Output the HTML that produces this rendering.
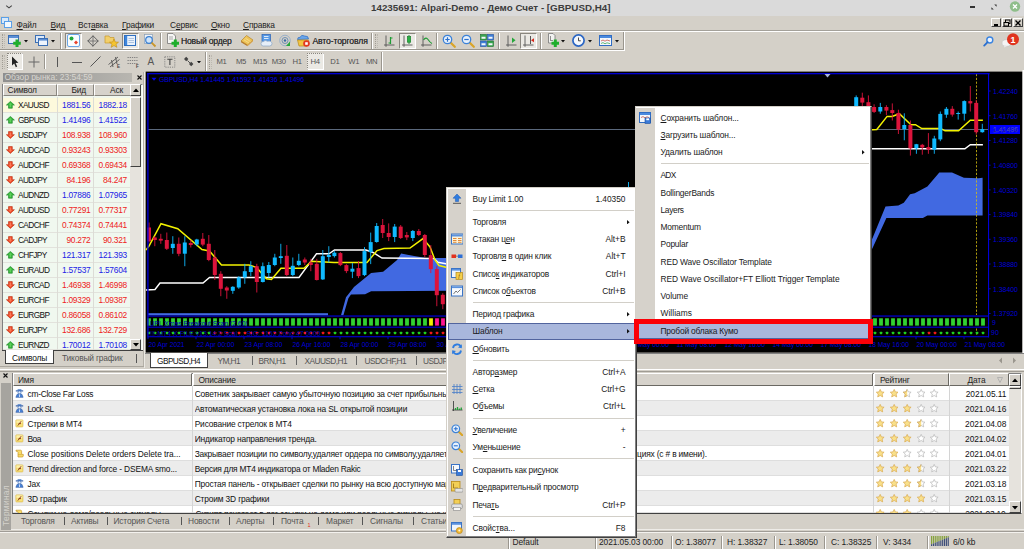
<!DOCTYPE html>
<html lang="ru"><head><meta charset="utf-8"><title>MetaTrader 4</title>
<style>
*{box-sizing:border-box}
html,body{margin:0;padding:0}
body{width:1024px;height:549px;overflow:hidden;position:relative;background:#d4d0c8;
 font-family:"Liberation Sans",sans-serif;font-size:8.4px;color:#111;line-height:1;letter-spacing:-0.17px}
.a{position:absolute;white-space:nowrap}
.t{position:absolute;white-space:nowrap;line-height:10px;height:10px}
u{text-decoration:underline;text-underline-offset:1px;text-decoration-thickness:0.7px}
.btn{position:absolute;background:#e9e7e2;border:1px solid;border-color:#fff #8a8780 #8a8780 #fff}
.pressed{position:absolute;background:#ebe9e4;border:1px solid;border-color:#8a8780 #fff #fff #8a8780}
.vsep{position:absolute;width:2px;border-left:1px solid #9a968e;border-right:1px solid #fff}
.grip{position:absolute;width:3px;border-left:1px dotted #a09c94;border-right:1px dotted #bcb8b0}
svg text{letter-spacing:0}
.tf{position:absolute;font-size:7.7px;letter-spacing:-0.35px;color:#555;line-height:10px;white-space:nowrap}
</style></head>
<body>
<div class="a" style="left:0;top:0;width:1024px;height:16px;background:#dadada"></div>
<div class="a" id="title" style="left:371px;top:1px;height:14px;line-height:14px;font-weight:bold;font-size:9.8px;color:#3c3c3c;letter-spacing:0px">14235691: Alpari-Demo - Демо Счет - [GBPUSD,H4]</div>
<svg class="a" style="left:5px;top:4px" width="8" height="6"><path d="M1.2 1.6 L4 3.9 L6.8 1.6" stroke="#444" stroke-width="1.1" fill="none"/></svg>
<div class="a" style="left:970px;top:6px;width:5px;height:1.5px;background:#333"></div>
<svg class="a" style="left:991px;top:3.5px" width="6" height="6"><path d="M3.2 0.4 L5.6 0.4 L5.6 2.8 Z M0.4 3.2 L0.4 5.6 L2.8 5.6 Z" fill="#333"/></svg>
<svg class="a" style="left:1009px;top:1px" width="12" height="12"><circle cx="6" cy="5.5" r="5.2" fill="#8fbe8a"/><path d="M4 3.5 L8 7.5 M8 3.5 L4 7.5" stroke="#fff" stroke-width="1.4"/></svg>
<div class="a" style="left:0;top:16px;width:1024px;height:14px;background:#d4d0c8"></div>
<div class="a" style="left:0;top:30px;width:1024px;height:1px;background:#a4a19a"></div><div class="a" style="left:0;top:31px;width:1024px;height:1px;background:#fff"></div>
<svg class="a" style="left:1px;top:17px" width="12" height="12"><rect x="0.5" y="0.5" width="7" height="6" fill="#d8e9fa" stroke="#5a9fe8"/><rect x="3.5" y="4.5" width="7" height="6" fill="#f2f8fe" stroke="#5a9fe8"/></svg>
<div class="t mn" id="mn0" style="left:16.5px;top:19.6px;color:#222"><u>Ф</u>айл</div>
<div class="t mn" id="mn1" style="left:50.5px;top:19.6px;color:#222"><u>В</u>ид</div>
<div class="t mn" id="mn2" style="left:78px;top:19.6px;color:#222">Вст<u>а</u>вка</div>
<div class="t mn" id="mn3" style="left:122px;top:19.6px;color:#222"><u>Г</u>рафики</div>
<div class="t mn" id="mn4" style="left:170px;top:19.6px;color:#222">С<u>е</u>рвис</div>
<div class="t mn" id="mn5" style="left:211px;top:19.6px;color:#222"><u>О</u>кно</div>
<div class="t mn" id="mn6" style="left:243px;top:19.6px;color:#222"><u>С</u>правка</div>
<div class="btn" style="left:991px;top:17.5px;width:10px;height:9.5px;background:#d4d0c8;border-color:#fff #404040 #404040 #fff"></div>
<div class="btn" style="left:1002px;top:17.5px;width:10px;height:9.5px;background:#d4d0c8;border-color:#fff #404040 #404040 #fff"></div>
<div class="btn" style="left:1013px;top:17.5px;width:10px;height:9.5px;background:#d4d0c8;border-color:#fff #404040 #404040 #fff"></div>
<div class="a" style="left:993.5px;top:24px;width:4px;height:1.5px;background:#000"></div>
<svg class="a" style="left:1003px;top:18.5px" width="8" height="8"><rect x="2.5" y="1" width="4.5" height="3.5" fill="none" stroke="#000" stroke-width="1"/><rect x="1" y="3.5" width="4.5" height="3.5" fill="#d4d0c8" stroke="#000" stroke-width="1"/></svg>
<svg class="a" style="left:1014px;top:18.5px" width="8" height="8"><path d="M1.5 1.5 L6.5 6.5 M6.5 1.5 L1.5 6.5" stroke="#000" stroke-width="1.3"/></svg>
<div class="a" style="left:0;top:31.5px;width:625px;height:19.5px;border-right:1px solid #fff;border-bottom:1px solid #fff"></div>
<div class="a" style="left:0;top:31.5px;width:624px;height:18.8px;border-right:1px solid #9a968e;border-bottom:1px solid #9a968e"></div>
<div class="grip" style="left:2px;top:34px;height:14px"></div>
<svg class="a" style="left:8px;top:34px" width="14" height="14" viewBox="0 0 14 14" ><rect x="0.5" y="1.5" width="10" height="8" fill="#e6effa" stroke="#3b6fb5"/><rect x="1" y="2" width="9" height="2" fill="#5b8fd6"/><path d="M9 5.5 V13 M5.2 9.2 H12.8" stroke="#1fae2c" stroke-width="3"/></svg>
<svg class="a" style="left:24.0px;top:40px" width="4" height="2.5" viewBox="0 0 4 2.5" ><path d="M0 0 L4 0 L2 2.5 Z" fill="#111"/></svg>
<svg class="a" style="left:35px;top:34px" width="14" height="14" viewBox="0 0 14 14" ><rect x="0.5" y="1.5" width="9" height="7" fill="#dce9f8" stroke="#3b6fb5"/><rect x="3.5" y="4.5" width="9" height="7" fill="#eef4fc" stroke="#3b6fb5"/><rect x="4" y="5" width="8" height="1.6" fill="#5b8fd6"/></svg>
<svg class="a" style="left:51.0px;top:40px" width="4" height="2.5" viewBox="0 0 4 2.5" ><path d="M0 0 L4 0 L2 2.5 Z" fill="#111"/></svg>
<div class="vsep" style="left:60px;top:33px;height:16px"></div>
<div class="pressed" style="left:65px;top:32.5px;width:17px;height:16.5px"></div>
<svg class="a" style="left:67px;top:34px" width="13" height="13" viewBox="0 0 13 13" ><rect x="0.5" y="0.5" width="12" height="12" rx="1.5" fill="#fafdff" stroke="#6aa6e6"/><circle cx="4.5" cy="4.5" r="2" fill="#22a83a"/><path d="M9 6.5 L11 8.5 L9 10.5 L7 8.5 Z" fill="#e8402a"/></svg>
<svg class="a" style="left:86.5px;top:35px" width="12" height="12" viewBox="0 0 12 12" ><path d="M6 0.5 V11.5 M0.5 6 H11.5" stroke="#666" stroke-width="0.8"/><path d="M6 0.8 L11.2 6 L6 11.2 L0.8 6 Z" fill="none" stroke="#555" stroke-width="0.9"/></svg>
<svg class="a" style="left:104px;top:33px" width="15" height="15" viewBox="0 0 15 15" ><path d="M1 3 H5 L6 4.5 H10 V10 H1 Z" fill="#f2cf6a" stroke="#c79a2c" stroke-width="0.7"/><path d="M10 6 L11.3 9 L14.5 9.2 L12 11.2 L12.9 14.3 L10 12.6 L7.1 14.3 L8 11.2 L5.5 9.2 L8.7 9 Z" fill="#f5c530" stroke="#c08a14" stroke-width="0.6"/></svg>
<div class="pressed" style="left:121.5px;top:32.5px;width:17px;height:16.5px"></div>
<svg class="a" style="left:124px;top:35px" width="12" height="11" viewBox="0 0 12 11" ><rect x="0.5" y="0.5" width="11" height="10" fill="#eaf2fc" stroke="#2f6fc0"/><rect x="1" y="1" width="2.2" height="9" fill="#3f86dc"/><path d="M4.5 3.5 H10 M4.5 5.5 H10 M4.5 7.5 H10" stroke="#9db7d8" stroke-width="0.8"/></svg>
<svg class="a" style="left:143px;top:34px" width="14" height="14" viewBox="0 0 14 14" ><rect x="1.5" y="0.5" width="8" height="9" fill="#eef3f8" stroke="#8aa0b8" stroke-width="0.7"/><circle cx="6" cy="6" r="3.3" fill="#cfe4fa" stroke="#3a7fd0" stroke-width="1.2"/><path d="M8.6 8.6 L12.5 12.5" stroke="#c9962a" stroke-width="1.8"/></svg>
<div class="vsep" style="left:159.5px;top:33px;height:16px"></div>
<svg class="a" style="left:166px;top:33px" width="14" height="15" viewBox="0 0 14 15" ><path d="M1.5 0.5 H7 L9.5 3 V10.5 H1.5 Z" fill="#f6f6f4" stroke="#777" stroke-width="0.8"/><path d="M3 4 H7 M3 6 H7" stroke="#888" stroke-width="0.7"/><path d="M9.3 6.5 V14 M5.5 10.3 H13" stroke="#1fae2c" stroke-width="3"/></svg>
<div class="t" id="neword" style="left:181px;top:35.5px;color:#2a2a2a;font-size:8.6px;letter-spacing:-0.2px;text-shadow:0 0 0.2px #555">Новый ордер</div>
<svg class="a" style="left:240px;top:34px" width="14" height="13" viewBox="0 0 14 13" ><path d="M1 7 L6.5 1.5 L13 6 L7.5 11 Z" fill="#eec458" stroke="#b8852a" stroke-width="0.7"/><path d="M1 7 L7.5 11 L7.5 12.3 L1 8.3 Z" fill="#b87a28"/><path d="M7.5 11 L13 6 L13 7.2 L7.5 12.3 Z" fill="#d8a040"/><path d="M4 5.8 L9 9 M5.5 4.3 L10.5 7.5" stroke="#f8e2a0" stroke-width="0.7"/></svg>
<svg class="a" style="left:260px;top:34px" width="13" height="13" viewBox="0 0 13 13" ><rect x="2" y="0.5" width="8.5" height="7" fill="#5a9be6" stroke="#2a62b4" stroke-width="0.7"/><path d="M4 2.5 H8.5 M4 4.5 H8.5" stroke="#fff" stroke-width="0.8"/><path d="M1 9.5 Q1 7.3 3.4 7.6 Q5 5.6 7.5 7.2 Q11.8 6.6 12 9.6 Q12 12 9.5 12 H3.2 Q1 12 1 9.5 Z" fill="#e6eef8" stroke="#8aa6c6" stroke-width="0.7"/></svg>
<svg class="a" style="left:279px;top:34px" width="13" height="13" viewBox="0 0 13 13" ><circle cx="6" cy="6.5" r="5.3" fill="none" stroke="#9ab0c8" stroke-width="1"/><circle cx="6" cy="6.5" r="3" fill="none" stroke="#6d8fb6" stroke-width="1"/><circle cx="6" cy="6.5" r="1.2" fill="#3a6aa6"/><path d="M7 12 L11 7.5 L11 12 Z" fill="#27a838"/></svg>
<svg class="a" style="left:296px;top:33px" width="15" height="15" viewBox="0 0 15 15" ><path d="M1.5 6.5 Q1.5 4 4 4.3 Q5.5 1.2 8.6 3 Q12.5 2.6 12.5 6 Z" fill="#6aa6ea" stroke="#2d6bc0" stroke-width="0.7"/><path d="M1.5 7 H12.5 L11 13 H3 Z" fill="#f2c544" stroke="#b98a18" stroke-width="0.7"/><circle cx="10.5" cy="10.5" r="3.3" fill="#e23a22"/><rect x="9.2" y="9.2" width="2.6" height="2.6" fill="#fff"/></svg>
<div class="t" id="autot" style="left:312.5px;top:35.5px;color:#2a2a2a;font-size:8.6px;letter-spacing:-0.12px;text-shadow:0 0 0.2px #555">Авто-торговля</div>
<div class="vsep" style="left:371px;top:33px;height:16px"></div>
<div class="grip" style="left:375px;top:34px;height:14px"></div>
<svg class="a" style="left:383px;top:34px" width="13" height="14" viewBox="0 0 13 14" ><path d="M3 1.5 V12.8 M1 11 H11.5" stroke="#555" stroke-width="0.9"/><path d="M7.5 3 V10 M7.5 4 H9.5 M5.5 9 H7.5" stroke="#1e9c34" stroke-width="1.2"/></svg>
<div class="pressed" style="left:398.5px;top:32.5px;width:17px;height:16.5px"></div>
<svg class="a" style="left:401px;top:34px" width="13" height="14" viewBox="0 0 13 14" ><path d="M3 1.5 V12.8 M1 11 H11.5" stroke="#555" stroke-width="0.9"/><path d="M8 1 V10" stroke="#157c28" stroke-width="0.9"/><rect x="6.3" y="2.6" width="3.4" height="5.6" fill="#2cb044" stroke="#157c28" stroke-width="0.6"/></svg>
<svg class="a" style="left:420px;top:34px" width="13" height="14" viewBox="0 0 13 14" ><path d="M3 1.5 V12.8 M1 11 H11.5" stroke="#555" stroke-width="0.9"/><path d="M3.5 6 Q6 2.5 8 5.5 T12 9.5" stroke="#1e9c34" stroke-width="1.1" fill="none"/></svg>
<div class="vsep" style="left:435.5px;top:33px;height:16px"></div>
<svg class="a" style="left:442px;top:34px" width="14" height="14" viewBox="0 0 14 14" ><path d="M8.5 8.5 L12.8 12.8" stroke="#d9a428" stroke-width="2.2" stroke-linecap="round"/><circle cx="5.5" cy="5.5" r="4.2" fill="#e6f1fd" stroke="#3c82d8" stroke-width="1.3"/><path d="M3.3 5.5 H7.7 M5.5 3.3 V7.7" stroke="#2a6fcc" stroke-width="1.2"/></svg>
<svg class="a" style="left:461px;top:34px" width="14" height="14" viewBox="0 0 14 14" ><path d="M8.5 8.5 L12.8 12.8" stroke="#d9a428" stroke-width="2.2" stroke-linecap="round"/><circle cx="5.5" cy="5.5" r="4.2" fill="#e6f1fd" stroke="#3c82d8" stroke-width="1.3"/><path d="M3.3 5.5 H7.7" stroke="#2a6fcc" stroke-width="1.2"/></svg>
<svg class="a" style="left:480px;top:34px" width="14" height="13" viewBox="0 0 14 13" ><rect x="0.5" y="0.5" width="6" height="5.5" fill="#3aa650" stroke="#1c6e2c" stroke-width="0.6"/><rect x="7.5" y="0.5" width="6" height="5.5" fill="#3f7fd8" stroke="#1f4f9c" stroke-width="0.6"/><rect x="0.5" y="7" width="6" height="5.5" fill="#3f7fd8" stroke="#1f4f9c" stroke-width="0.6"/><rect x="7.5" y="7" width="6" height="5.5" fill="#3aa650" stroke="#1c6e2c" stroke-width="0.6"/><path d="M1.5 3.8 H5.5 M8.5 3.8 H12.5 M1.5 10.3 H5.5 M8.5 10.3 H12.5" stroke="#f2f6fa" stroke-width="2"/></svg>
<div class="vsep" style="left:497.5px;top:33px;height:16px"></div>
<svg class="a" style="left:504.5px;top:34px" width="13" height="14" viewBox="0 0 13 14" ><path d="M3 1.5 V12.8 M1 11 H11.5" stroke="#555" stroke-width="0.9"/><path d="M7 3.5 L10.5 6.2 L7 9 Z" fill="#25a63a"/></svg>
<div class="pressed" style="left:519.5px;top:32.5px;width:17px;height:16.5px"></div>
<svg class="a" style="left:522px;top:34px" width="13" height="14" viewBox="0 0 13 14" ><path d="M3 1.5 V12.8 M1 11 H11.5" stroke="#555" stroke-width="0.9"/><path d="M8.5 2 V10" stroke="#444" stroke-width="0.9"/><path d="M12 4.2 L9 6.2 L12 8.2 Z" fill="#d8281c"/></svg>
<div class="vsep" style="left:539.5px;top:33px;height:16px"></div>
<svg class="a" style="left:546px;top:33px" width="14" height="15" viewBox="0 0 14 15" ><path d="M2.5 0.5 H7 L9 2.5 V10 H2.5 Z" fill="#f2f2f0" stroke="#777" stroke-width="0.8"/><path d="M4.5 3 V7 M4 7.5 H7" stroke="#666" stroke-width="0.7"/><path d="M9.3 6.5 V14 M5.5 10.3 H13" stroke="#1fae2c" stroke-width="3"/></svg>
<svg class="a" style="left:561.0px;top:40px" width="4" height="2.5" viewBox="0 0 4 2.5" ><path d="M0 0 L4 0 L2 2.5 Z" fill="#111"/></svg>
<svg class="a" style="left:572px;top:34px" width="13" height="13" viewBox="0 0 13 13" ><circle cx="6.5" cy="6.5" r="5.6" fill="#f4f8fd" stroke="#2b66c4" stroke-width="1.7"/><path d="M6.5 3.5 V6.8 H8.8" stroke="#333" stroke-width="0.9" fill="none"/></svg>
<svg class="a" style="left:587.5px;top:40px" width="4" height="2.5" viewBox="0 0 4 2.5" ><path d="M0 0 L4 0 L2 2.5 Z" fill="#111"/></svg>
<svg class="a" style="left:599px;top:35px" width="13" height="11" viewBox="0 0 13 11" ><rect x="0.5" y="0.5" width="12" height="10" fill="#f4f8fd" stroke="#2f6cc4"/><rect x="1" y="1" width="11" height="2" fill="#4b8ade"/><path d="M2 6 L4 5 L6 6.2 L8 5 L11 6" stroke="#c04030" stroke-width="0.7" fill="none"/><path d="M2 8.5 L4 7.6 L6 8.8 L8 7.8 L11 8.6" stroke="#2c9c40" stroke-width="0.7" fill="none"/></svg>
<svg class="a" style="left:614.5px;top:40px" width="4" height="2.5" viewBox="0 0 4 2.5" ><path d="M0 0 L4 0 L2 2.5 Z" fill="#111"/></svg>
<svg class="a" style="left:983px;top:36px" width="11" height="11" viewBox="0 0 11 11" ><circle cx="6.8" cy="4" r="3" fill="#eaf3ff" stroke="#3a84e0" stroke-width="1.4"/><path d="M4.6 6.2 L1.2 9.6" stroke="#2a6fd0" stroke-width="1.8" stroke-linecap="round"/></svg>
<svg class="a" style="left:1001px;top:33px" width="20" height="15" viewBox="0 0 20 15" ><ellipse cx="5.5" cy="10" rx="4.5" ry="3.3" fill="#f4f4f4" stroke="#c4c4c4" stroke-width="0.6"/><path d="M3.5 12.3 L3 14.5 L6 13 Z" fill="#ececec"/><circle cx="12" cy="6.3" r="6" fill="#e0331e"/><text x="12" y="9.6" font-size="9" font-weight="bold" fill="#fff" text-anchor="middle" font-family="Liberation Sans, sans-serif">1</text></svg>
<div class="a" style="left:0;top:51.5px;width:206px;height:19.5px;border-right:1px solid #9a968e"></div>
<div class="a" style="left:206px;top:51.5px;width:176px;height:19.5px;border-left:1px solid #fff;border-right:1px solid #9a968e"></div>
<div class="a" style="left:382px;top:51.5px;width:1px;height:19.5px;background:#fff"></div>
<div class="grip" style="left:2px;top:54.5px;height:14px"></div>
<div class="pressed" style="left:6.5px;top:53px;width:16.5px;height:17px;border-style:dotted solid solid dotted;border-color:#8a8780 #fff #fff #8a8780"></div>
<svg class="a" style="left:11px;top:56px" width="8" height="12" viewBox="0 0 8 12" ><path d="M1 0.5 V9.5 L3.2 7.6 L4.8 11.2 L6.2 10.5 L4.6 7 L7.4 6.8 Z" fill="#222"/></svg>
<svg class="a" style="left:28px;top:56px" width="12" height="12" viewBox="0 0 12 12" ><path d="M6 0.5 V11.5 M0.5 6 H11.5" stroke="#666" stroke-width="1"/></svg>
<div class="vsep" style="left:44px;top:54px;height:15px"></div>
<div class="a" style="left:57px;top:57px;width:1px;height:10px;background:#555"></div>
<div class="a" style="left:71.5px;top:61.5px;width:10px;height:1px;background:#555"></div>
<svg class="a" style="left:90px;top:56px" width="11" height="11" viewBox="0 0 11 11" ><path d="M0.5 10.5 L10.5 0.5" stroke="#555" stroke-width="1"/></svg>
<svg class="a" style="left:108px;top:55px" width="13" height="13" viewBox="0 0 13 13" ><path d="M0.5 9.5 L10 2 M2 12 L11.5 4.5 M3.5 5 L5 12 M7.5 2 L9 9" stroke="#555" stroke-width="0.9"/><text x="9" y="13" font-size="4.5" font-weight="bold" fill="#444" font-family="Liberation Sans, sans-serif">E</text></svg>
<svg class="a" style="left:127px;top:56px" width="13" height="12" viewBox="0 0 13 12" ><path d="M0.5 1.5 H10.5 M0.5 4.5 H10.5 M0.5 7.5 H10.5" stroke="#777" stroke-width="0.9" stroke-dasharray="1.3 0.9"/><text x="9" y="11.8" font-size="4.5" font-weight="bold" fill="#444" font-family="Liberation Sans, sans-serif">F</text></svg>
<div class="t" style="left:147.5px;top:56.5px;font-size:10px;color:#555">A</div>
<svg class="a" style="left:164px;top:55.5px" width="12" height="12" viewBox="0 0 12 12" ><rect x="0.8" y="0.8" width="10" height="10.4" fill="none" stroke="#777" stroke-width="0.8" stroke-dasharray="1.2 1"/><path d="M3.3 3.3 H8.5 M5.9 3.3 V9" stroke="#444" stroke-width="1.1"/></svg>
<svg class="a" style="left:182.5px;top:56px" width="12" height="11" viewBox="0 0 12 11" ><path d="M1 3 L3.2 0.8 L5.4 3 L3.2 5.2 Z M6 8 L8.2 5.8 L10.4 8 L8.2 10.2 Z" fill="#444"/><path d="M4.5 4.5 L7 7" stroke="#444" stroke-width="0.9"/></svg>
<svg class="a" style="left:197.0px;top:60.5px" width="4" height="2.5" viewBox="0 0 4 2.5" ><path d="M0 0 L4 0 L2 2.5 Z" fill="#111"/></svg>
<div class="grip" style="left:209px;top:54.5px;height:14px"></div>
<div class="pressed" style="left:307px;top:53px;width:17px;height:17px;border-style:dotted solid solid dotted;border-color:#8a8780 #fff #fff #8a8780"></div>
<div class="tf" id="tf0" style="left:216.5px;top:56.5px">M1</div>
<div class="tf" id="tf1" style="left:236px;top:56.5px">M5</div>
<div class="tf" id="tf2" style="left:253px;top:56.5px">M15</div>
<div class="tf" id="tf3" style="left:271.7px;top:56.5px">M30</div>
<div class="tf" id="tf4" style="left:292.6px;top:56.5px">H1</div>
<div class="tf" id="tf5" style="left:310.5px;top:56.5px">H4</div>
<div class="tf" id="tf6" style="left:330.3px;top:56.5px">D1</div>
<div class="tf" id="tf7" style="left:348.3px;top:56.5px">W1</div>
<div class="tf" id="tf8" style="left:366px;top:56.5px">MN</div>
<div class="a" style="left:2.5px;top:72.7px;width:129.5px;height:9px;background:linear-gradient(90deg,#8e8e8e,#b8b6b0)"></div>
<div class="t" id="mwt" style="left:4.5px;top:72.3px;color:#d8d6d0;font-size:8.5px;letter-spacing:-0.04px">Обзор рынка: 23:54:59</div>
<svg class="a" style="left:136.5px;top:75px" width="5" height="5" viewBox="0 0 5 5" ><path d="M0.5 0.5 L4.5 4.5 M4.5 0.5 L0.5 4.5" stroke="#111" stroke-width="1.1"/></svg>
<div class="a" style="left:2px;top:83.5px;width:141px;height:267.5px;border:1px solid;border-color:#808080 #fff #fff #808080;background:#f0f7ee"></div>
<div class="a" style="left:3px;top:83.8px;width:54px;height:12.5px;background:#d6d2cb;border:1px solid;border-color:#fff #8a8780 #8a8780 #fff"></div>
<div class="t" style="left:7.5px;top:85.3px;color:#222;font-size:8.4px">Символ</div>
<div class="a" style="left:57px;top:83.8px;width:36.5px;height:12.5px;background:#d6d2cb;border:1px solid;border-color:#fff #8a8780 #8a8780 #fff"></div>
<div class="t" style="left:57px;width:29.0px;text-align:right;top:85.3px;color:#222;font-size:8.4px">Бид</div>
<div class="a" style="left:93.5px;top:83.8px;width:37px;height:12.5px;background:#d6d2cb;border:1px solid;border-color:#fff #8a8780 #8a8780 #fff"></div>
<div class="t" style="left:93.5px;width:29.5px;text-align:right;top:85.3px;color:#222;font-size:8.4px">Аск</div>
<div class="a" style="left:3px;top:97.5px;width:126.8px;height:15px;background:#fdf9dc;border-bottom:1px solid #e2e2dc"></div>
<svg class="a" style="left:6px;top:101.2px" width="9" height="8" viewBox="0 0 9 8" ><path d="M4.4 0.4 L8.4 4.1 L6.3 4.1 L6.3 7.2 L2.5 7.2 L2.5 4.1 L0.4 4.1 Z" fill="#34b43a" stroke="#1f8428" stroke-width="0.6" stroke-linejoin="round"/><path d="M4.4 1.8 L6.2 3.6 L5.2 3.6 L5.2 6.2 L3.6 6.2 L3.6 3.6 L2.6 3.6 Z" fill="#6fdc6a" opacity="0.7"/></svg>
<div class="t mws" style="left:18px;top:100.0px;color:#111;font-size:8.3px;letter-spacing:-0.62px">XAUUSD</div>
<div class="t" style="left:57px;width:33.5px;text-align:right;top:100.0px;color:#2222e6;font-size:8.4px;letter-spacing:-0.25px">1881.56</div>
<div class="t" style="left:93.5px;width:33.5px;text-align:right;top:100.0px;color:#2222e6;font-size:8.4px;letter-spacing:-0.25px">1882.18</div>
<div class="a" style="left:3px;top:112.5px;width:126.8px;height:15px;background:#f0f8ef;border-bottom:1px solid #e2e2dc"></div>
<svg class="a" style="left:6px;top:116.2px" width="9" height="8" viewBox="0 0 9 8" ><path d="M4.4 0.4 L8.4 4.1 L6.3 4.1 L6.3 7.2 L2.5 7.2 L2.5 4.1 L0.4 4.1 Z" fill="#34b43a" stroke="#1f8428" stroke-width="0.6" stroke-linejoin="round"/><path d="M4.4 1.8 L6.2 3.6 L5.2 3.6 L5.2 6.2 L3.6 6.2 L3.6 3.6 L2.6 3.6 Z" fill="#6fdc6a" opacity="0.7"/></svg>
<div class="t mws" style="left:18px;top:115.0px;color:#111;font-size:8.3px;letter-spacing:-0.62px">GBPUSD</div>
<div class="t" style="left:57px;width:33.5px;text-align:right;top:115.0px;color:#2222e6;font-size:8.4px;letter-spacing:-0.25px">1.41496</div>
<div class="t" style="left:93.5px;width:33.5px;text-align:right;top:115.0px;color:#2222e6;font-size:8.4px;letter-spacing:-0.25px">1.41522</div>
<div class="a" style="left:3px;top:127.5px;width:126.8px;height:15px;background:#f0f8ef;border-bottom:1px solid #e2e2dc"></div>
<svg class="a" style="left:6px;top:131.2px" width="9" height="8" viewBox="0 0 9 8" ><path d="M4.4 7.4 L8.4 3.7 L6.3 3.7 L6.3 0.6 L2.5 0.6 L2.5 3.7 L0.4 3.7 Z" fill="#ee4622" stroke="#b83014" stroke-width="0.6" stroke-linejoin="round"/><path d="M4.4 6 L6.2 4.2 L5.2 4.2 L5.2 1.6 L3.6 1.6 L3.6 4.2 L2.6 4.2 Z" fill="#ff9070" opacity="0.7"/></svg>
<div class="t mws" style="left:18px;top:130.0px;color:#111;font-size:8.3px;letter-spacing:-0.62px">USDJPY</div>
<div class="t" style="left:57px;width:33.5px;text-align:right;top:130.0px;color:#ee2222;font-size:8.4px;letter-spacing:-0.25px">108.938</div>
<div class="t" style="left:93.5px;width:33.5px;text-align:right;top:130.0px;color:#ee2222;font-size:8.4px;letter-spacing:-0.25px">108.960</div>
<div class="a" style="left:3px;top:142.5px;width:126.8px;height:15px;background:#f0f8ef;border-bottom:1px solid #e2e2dc"></div>
<svg class="a" style="left:6px;top:146.2px" width="9" height="8" viewBox="0 0 9 8" ><path d="M4.4 7.4 L8.4 3.7 L6.3 3.7 L6.3 0.6 L2.5 0.6 L2.5 3.7 L0.4 3.7 Z" fill="#ee4622" stroke="#b83014" stroke-width="0.6" stroke-linejoin="round"/><path d="M4.4 6 L6.2 4.2 L5.2 4.2 L5.2 1.6 L3.6 1.6 L3.6 4.2 L2.6 4.2 Z" fill="#ff9070" opacity="0.7"/></svg>
<div class="t mws" style="left:18px;top:145.0px;color:#111;font-size:8.3px;letter-spacing:-0.62px">AUDCAD</div>
<div class="t" style="left:57px;width:33.5px;text-align:right;top:145.0px;color:#ee2222;font-size:8.4px;letter-spacing:-0.25px">0.93243</div>
<div class="t" style="left:93.5px;width:33.5px;text-align:right;top:145.0px;color:#ee2222;font-size:8.4px;letter-spacing:-0.25px">0.93303</div>
<div class="a" style="left:3px;top:157.5px;width:126.8px;height:15px;background:#f0f8ef;border-bottom:1px solid #e2e2dc"></div>
<svg class="a" style="left:6px;top:161.2px" width="9" height="8" viewBox="0 0 9 8" ><path d="M4.4 7.4 L8.4 3.7 L6.3 3.7 L6.3 0.6 L2.5 0.6 L2.5 3.7 L0.4 3.7 Z" fill="#ee4622" stroke="#b83014" stroke-width="0.6" stroke-linejoin="round"/><path d="M4.4 6 L6.2 4.2 L5.2 4.2 L5.2 1.6 L3.6 1.6 L3.6 4.2 L2.6 4.2 Z" fill="#ff9070" opacity="0.7"/></svg>
<div class="t mws" style="left:18px;top:160.0px;color:#111;font-size:8.3px;letter-spacing:-0.62px">AUDCHF</div>
<div class="t" style="left:57px;width:33.5px;text-align:right;top:160.0px;color:#ee2222;font-size:8.4px;letter-spacing:-0.25px">0.69368</div>
<div class="t" style="left:93.5px;width:33.5px;text-align:right;top:160.0px;color:#ee2222;font-size:8.4px;letter-spacing:-0.25px">0.69434</div>
<div class="a" style="left:3px;top:172.5px;width:126.8px;height:15px;background:#f0f8ef;border-bottom:1px solid #e2e2dc"></div>
<svg class="a" style="left:6px;top:176.2px" width="9" height="8" viewBox="0 0 9 8" ><path d="M4.4 7.4 L8.4 3.7 L6.3 3.7 L6.3 0.6 L2.5 0.6 L2.5 3.7 L0.4 3.7 Z" fill="#ee4622" stroke="#b83014" stroke-width="0.6" stroke-linejoin="round"/><path d="M4.4 6 L6.2 4.2 L5.2 4.2 L5.2 1.6 L3.6 1.6 L3.6 4.2 L2.6 4.2 Z" fill="#ff9070" opacity="0.7"/></svg>
<div class="t mws" style="left:18px;top:175.0px;color:#111;font-size:8.3px;letter-spacing:-0.62px">AUDJPY</div>
<div class="t" style="left:57px;width:33.5px;text-align:right;top:175.0px;color:#ee2222;font-size:8.4px;letter-spacing:-0.25px">84.196</div>
<div class="t" style="left:93.5px;width:33.5px;text-align:right;top:175.0px;color:#ee2222;font-size:8.4px;letter-spacing:-0.25px">84.247</div>
<div class="a" style="left:3px;top:187.5px;width:126.8px;height:15px;background:#f0f8ef;border-bottom:1px solid #e2e2dc"></div>
<svg class="a" style="left:6px;top:191.2px" width="9" height="8" viewBox="0 0 9 8" ><path d="M4.4 0.4 L8.4 4.1 L6.3 4.1 L6.3 7.2 L2.5 7.2 L2.5 4.1 L0.4 4.1 Z" fill="#34b43a" stroke="#1f8428" stroke-width="0.6" stroke-linejoin="round"/><path d="M4.4 1.8 L6.2 3.6 L5.2 3.6 L5.2 6.2 L3.6 6.2 L3.6 3.6 L2.6 3.6 Z" fill="#6fdc6a" opacity="0.7"/></svg>
<div class="t mws" style="left:18px;top:190.0px;color:#111;font-size:8.3px;letter-spacing:-0.62px">AUDNZD</div>
<div class="t" style="left:57px;width:33.5px;text-align:right;top:190.0px;color:#2222e6;font-size:8.4px;letter-spacing:-0.25px">1.07886</div>
<div class="t" style="left:93.5px;width:33.5px;text-align:right;top:190.0px;color:#2222e6;font-size:8.4px;letter-spacing:-0.25px">1.07965</div>
<div class="a" style="left:3px;top:202.5px;width:126.8px;height:15px;background:#f0f8ef;border-bottom:1px solid #e2e2dc"></div>
<svg class="a" style="left:6px;top:206.2px" width="9" height="8" viewBox="0 0 9 8" ><path d="M4.4 7.4 L8.4 3.7 L6.3 3.7 L6.3 0.6 L2.5 0.6 L2.5 3.7 L0.4 3.7 Z" fill="#ee4622" stroke="#b83014" stroke-width="0.6" stroke-linejoin="round"/><path d="M4.4 6 L6.2 4.2 L5.2 4.2 L5.2 1.6 L3.6 1.6 L3.6 4.2 L2.6 4.2 Z" fill="#ff9070" opacity="0.7"/></svg>
<div class="t mws" style="left:18px;top:205.0px;color:#111;font-size:8.3px;letter-spacing:-0.62px">AUDUSD</div>
<div class="t" style="left:57px;width:33.5px;text-align:right;top:205.0px;color:#ee2222;font-size:8.4px;letter-spacing:-0.25px">0.77291</div>
<div class="t" style="left:93.5px;width:33.5px;text-align:right;top:205.0px;color:#ee2222;font-size:8.4px;letter-spacing:-0.25px">0.77317</div>
<div class="a" style="left:3px;top:217.5px;width:126.8px;height:15px;background:#f0f8ef;border-bottom:1px solid #e2e2dc"></div>
<svg class="a" style="left:6px;top:221.2px" width="9" height="8" viewBox="0 0 9 8" ><path d="M4.4 7.4 L8.4 3.7 L6.3 3.7 L6.3 0.6 L2.5 0.6 L2.5 3.7 L0.4 3.7 Z" fill="#ee4622" stroke="#b83014" stroke-width="0.6" stroke-linejoin="round"/><path d="M4.4 6 L6.2 4.2 L5.2 4.2 L5.2 1.6 L3.6 1.6 L3.6 4.2 L2.6 4.2 Z" fill="#ff9070" opacity="0.7"/></svg>
<div class="t mws" style="left:18px;top:220.0px;color:#111;font-size:8.3px;letter-spacing:-0.62px">CADCHF</div>
<div class="t" style="left:57px;width:33.5px;text-align:right;top:220.0px;color:#ee2222;font-size:8.4px;letter-spacing:-0.25px">0.74374</div>
<div class="t" style="left:93.5px;width:33.5px;text-align:right;top:220.0px;color:#ee2222;font-size:8.4px;letter-spacing:-0.25px">0.74441</div>
<div class="a" style="left:3px;top:232.5px;width:126.8px;height:15px;background:#f0f8ef;border-bottom:1px solid #e2e2dc"></div>
<svg class="a" style="left:6px;top:236.2px" width="9" height="8" viewBox="0 0 9 8" ><path d="M4.4 7.4 L8.4 3.7 L6.3 3.7 L6.3 0.6 L2.5 0.6 L2.5 3.7 L0.4 3.7 Z" fill="#ee4622" stroke="#b83014" stroke-width="0.6" stroke-linejoin="round"/><path d="M4.4 6 L6.2 4.2 L5.2 4.2 L5.2 1.6 L3.6 1.6 L3.6 4.2 L2.6 4.2 Z" fill="#ff9070" opacity="0.7"/></svg>
<div class="t mws" style="left:18px;top:235.0px;color:#111;font-size:8.3px;letter-spacing:-0.62px">CADJPY</div>
<div class="t" style="left:57px;width:33.5px;text-align:right;top:235.0px;color:#ee2222;font-size:8.4px;letter-spacing:-0.25px">90.272</div>
<div class="t" style="left:93.5px;width:33.5px;text-align:right;top:235.0px;color:#ee2222;font-size:8.4px;letter-spacing:-0.25px">90.321</div>
<div class="a" style="left:3px;top:247.5px;width:126.8px;height:15px;background:#f0f8ef;border-bottom:1px solid #e2e2dc"></div>
<svg class="a" style="left:6px;top:251.2px" width="9" height="8" viewBox="0 0 9 8" ><path d="M4.4 0.4 L8.4 4.1 L6.3 4.1 L6.3 7.2 L2.5 7.2 L2.5 4.1 L0.4 4.1 Z" fill="#34b43a" stroke="#1f8428" stroke-width="0.6" stroke-linejoin="round"/><path d="M4.4 1.8 L6.2 3.6 L5.2 3.6 L5.2 6.2 L3.6 6.2 L3.6 3.6 L2.6 3.6 Z" fill="#6fdc6a" opacity="0.7"/></svg>
<div class="t mws" style="left:18px;top:250.0px;color:#111;font-size:8.3px;letter-spacing:-0.62px">CHFJPY</div>
<div class="t" style="left:57px;width:33.5px;text-align:right;top:250.0px;color:#2222e6;font-size:8.4px;letter-spacing:-0.25px">121.317</div>
<div class="t" style="left:93.5px;width:33.5px;text-align:right;top:250.0px;color:#2222e6;font-size:8.4px;letter-spacing:-0.25px">121.393</div>
<div class="a" style="left:3px;top:262.5px;width:126.8px;height:15px;background:#f0f8ef;border-bottom:1px solid #e2e2dc"></div>
<svg class="a" style="left:6px;top:266.2px" width="9" height="8" viewBox="0 0 9 8" ><path d="M4.4 0.4 L8.4 4.1 L6.3 4.1 L6.3 7.2 L2.5 7.2 L2.5 4.1 L0.4 4.1 Z" fill="#34b43a" stroke="#1f8428" stroke-width="0.6" stroke-linejoin="round"/><path d="M4.4 1.8 L6.2 3.6 L5.2 3.6 L5.2 6.2 L3.6 6.2 L3.6 3.6 L2.6 3.6 Z" fill="#6fdc6a" opacity="0.7"/></svg>
<div class="t mws" style="left:18px;top:265.0px;color:#111;font-size:8.3px;letter-spacing:-0.62px">EURAUD</div>
<div class="t" style="left:57px;width:33.5px;text-align:right;top:265.0px;color:#2222e6;font-size:8.4px;letter-spacing:-0.25px">1.57537</div>
<div class="t" style="left:93.5px;width:33.5px;text-align:right;top:265.0px;color:#2222e6;font-size:8.4px;letter-spacing:-0.25px">1.57604</div>
<div class="a" style="left:3px;top:277.5px;width:126.8px;height:15px;background:#f0f8ef;border-bottom:1px solid #e2e2dc"></div>
<svg class="a" style="left:6px;top:281.2px" width="9" height="8" viewBox="0 0 9 8" ><path d="M4.4 7.4 L8.4 3.7 L6.3 3.7 L6.3 0.6 L2.5 0.6 L2.5 3.7 L0.4 3.7 Z" fill="#ee4622" stroke="#b83014" stroke-width="0.6" stroke-linejoin="round"/><path d="M4.4 6 L6.2 4.2 L5.2 4.2 L5.2 1.6 L3.6 1.6 L3.6 4.2 L2.6 4.2 Z" fill="#ff9070" opacity="0.7"/></svg>
<div class="t mws" style="left:18px;top:280.0px;color:#111;font-size:8.3px;letter-spacing:-0.62px">EURCAD</div>
<div class="t" style="left:57px;width:33.5px;text-align:right;top:280.0px;color:#ee2222;font-size:8.4px;letter-spacing:-0.25px">1.46938</div>
<div class="t" style="left:93.5px;width:33.5px;text-align:right;top:280.0px;color:#ee2222;font-size:8.4px;letter-spacing:-0.25px">1.46998</div>
<div class="a" style="left:3px;top:292.5px;width:126.8px;height:15px;background:#f0f8ef;border-bottom:1px solid #e2e2dc"></div>
<svg class="a" style="left:6px;top:296.2px" width="9" height="8" viewBox="0 0 9 8" ><path d="M4.4 7.4 L8.4 3.7 L6.3 3.7 L6.3 0.6 L2.5 0.6 L2.5 3.7 L0.4 3.7 Z" fill="#ee4622" stroke="#b83014" stroke-width="0.6" stroke-linejoin="round"/><path d="M4.4 6 L6.2 4.2 L5.2 4.2 L5.2 1.6 L3.6 1.6 L3.6 4.2 L2.6 4.2 Z" fill="#ff9070" opacity="0.7"/></svg>
<div class="t mws" style="left:18px;top:295.0px;color:#111;font-size:8.3px;letter-spacing:-0.62px">EURCHF</div>
<div class="t" style="left:57px;width:33.5px;text-align:right;top:295.0px;color:#ee2222;font-size:8.4px;letter-spacing:-0.25px">1.09329</div>
<div class="t" style="left:93.5px;width:33.5px;text-align:right;top:295.0px;color:#ee2222;font-size:8.4px;letter-spacing:-0.25px">1.09387</div>
<div class="a" style="left:3px;top:307.5px;width:126.8px;height:15px;background:#f0f8ef;border-bottom:1px solid #e2e2dc"></div>
<svg class="a" style="left:6px;top:311.2px" width="9" height="8" viewBox="0 0 9 8" ><path d="M4.4 7.4 L8.4 3.7 L6.3 3.7 L6.3 0.6 L2.5 0.6 L2.5 3.7 L0.4 3.7 Z" fill="#ee4622" stroke="#b83014" stroke-width="0.6" stroke-linejoin="round"/><path d="M4.4 6 L6.2 4.2 L5.2 4.2 L5.2 1.6 L3.6 1.6 L3.6 4.2 L2.6 4.2 Z" fill="#ff9070" opacity="0.7"/></svg>
<div class="t mws" style="left:18px;top:310.0px;color:#111;font-size:8.3px;letter-spacing:-0.62px">EURGBP</div>
<div class="t" style="left:57px;width:33.5px;text-align:right;top:310.0px;color:#ee2222;font-size:8.4px;letter-spacing:-0.25px">0.86058</div>
<div class="t" style="left:93.5px;width:33.5px;text-align:right;top:310.0px;color:#ee2222;font-size:8.4px;letter-spacing:-0.25px">0.86102</div>
<div class="a" style="left:3px;top:322.5px;width:126.8px;height:15px;background:#f0f8ef;border-bottom:1px solid #e2e2dc"></div>
<svg class="a" style="left:6px;top:326.2px" width="9" height="8" viewBox="0 0 9 8" ><path d="M4.4 7.4 L8.4 3.7 L6.3 3.7 L6.3 0.6 L2.5 0.6 L2.5 3.7 L0.4 3.7 Z" fill="#ee4622" stroke="#b83014" stroke-width="0.6" stroke-linejoin="round"/><path d="M4.4 6 L6.2 4.2 L5.2 4.2 L5.2 1.6 L3.6 1.6 L3.6 4.2 L2.6 4.2 Z" fill="#ff9070" opacity="0.7"/></svg>
<div class="t mws" style="left:18px;top:325.0px;color:#111;font-size:8.3px;letter-spacing:-0.62px">EURJPY</div>
<div class="t" style="left:57px;width:33.5px;text-align:right;top:325.0px;color:#ee2222;font-size:8.4px;letter-spacing:-0.25px">132.686</div>
<div class="t" style="left:93.5px;width:33.5px;text-align:right;top:325.0px;color:#ee2222;font-size:8.4px;letter-spacing:-0.25px">132.729</div>
<div class="a" style="left:3px;top:337.5px;width:126.8px;height:12.8px;background:#f0f8ef;border-bottom:1px solid #e2e2dc"></div>
<svg class="a" style="left:6px;top:341.2px" width="9" height="8" viewBox="0 0 9 8" ><path d="M4.4 0.4 L8.4 4.1 L6.3 4.1 L6.3 7.2 L2.5 7.2 L2.5 4.1 L0.4 4.1 Z" fill="#34b43a" stroke="#1f8428" stroke-width="0.6" stroke-linejoin="round"/><path d="M4.4 1.8 L6.2 3.6 L5.2 3.6 L5.2 6.2 L3.6 6.2 L3.6 3.6 L2.6 3.6 Z" fill="#6fdc6a" opacity="0.7"/></svg>
<div class="t mws" style="left:18px;top:340.0px;color:#111;font-size:8.3px;letter-spacing:-0.62px">EURNZD</div>
<div class="t" style="left:57px;width:33.5px;text-align:right;top:340.0px;color:#2222e6;font-size:8.4px;letter-spacing:-0.25px">1.70012</div>
<div class="t" style="left:93.5px;width:33.5px;text-align:right;top:340.0px;color:#2222e6;font-size:8.4px;letter-spacing:-0.25px">1.70108</div>
<div class="a" style="left:56.5px;top:97px;width:1px;height:253px;background:#dcdcd6"></div>
<div class="a" style="left:92.5px;top:97px;width:1px;height:253px;background:#dcdcd6"></div>
<div class="a" style="left:129.8px;top:83.8px;width:11.5px;height:266.2px;background:#e6e3dd"></div>
<div class="btn" style="left:129.8px;top:83.8px;width:11.5px;height:12.5px;background:#d4d0c8;border-color:#fff #404040 #404040 #fff"></div>
<svg class="a" style="left:132.7px;top:88px" width="6" height="4" viewBox="0 0 6 4" ><path d="M0 4 L3 0.5 L6 4 Z" fill="#000"/></svg>
<div class="btn" style="left:129.8px;top:96.5px;width:11.5px;height:70px;background:#d4d0c8;border-color:#fff #404040 #404040 #fff"></div>
<div class="btn" style="left:129.8px;top:338.5px;width:11.5px;height:11.5px;background:#d4d0c8;border-color:#fff #404040 #404040 #fff"></div>
<svg class="a" style="left:132.7px;top:342.7px" width="6" height="4" viewBox="0 0 6 4" ><path d="M0 0 L3 3.5 L6 0 Z" fill="#000"/></svg>
<div class="a" style="left:2px;top:350.3px;width:141px;height:1px;background:#404040"></div>
<div class="a" style="left:4.8px;top:350.3px;width:49.7px;height:13.7px;background:#fff;border:1px solid #404040;border-top:none"></div>
<div class="t" id="mwtab1" style="left:12px;top:353px;color:#111;font-size:8.4px">Символы</div>
<div class="t" id="mwtab2" style="left:62px;top:353px;color:#555;font-size:8.4px">Тиковый график</div>
<div class="a" style="left:136px;top:354px;width:1px;height:8.5px;background:#555"></div>
<div class="a" style="left:0;top:366px;width:143.5px;height:1px;background:#aaa69e"></div>
<div class="a" style="left:142.7px;top:72px;width:1px;height:294px;background:#b4b0a8"></div>
<div class="a" style="left:144px;top:71.5px;width:1px;height:296px;background:#eceae4"></div>
<svg class="a" style="left:145px;top:70px" width="879" height="283" viewBox="145 70 879 283" font-family="Liberation Sans, sans-serif">
<rect x="145.7" y="71.6" width="876.8" height="281" fill="#000"/>
<rect x="1022.5" y="70" width="1.5" height="283" fill="#fff"/>
<path d="M148 129.5 H989" stroke="#64748a" stroke-width="0.9"/>
<polygon points="341.0,315.2 346.0,297.2 354.0,287.1 371.1,273.1 383.1,271.7 397.1,260.1 401.1,253.5 414.2,256.1 426.2,258.1 450.2,258.1 450.2,290.8 371.1,291.2 365.1,294.2 351.0,294.6 348.4,298.2 343.4,315.2" fill="#4169e1"/>
<polygon points="867.3,249.3 872.8,237.4 885.5,206.4 898.3,205.5 903.8,202.8 910.1,194.2 914.7,193.3 927.4,186.4 939.3,172.4 952.0,172.4 963.9,177.7 978.4,178.2 982.6,177.7 982.6,215.6 927.4,215.6 922.9,217.9 886.4,217.9 872.8,247.4 867.3,258.4" fill="#4169e1"/>
<polyline points="146,290 155,289.5 160,283 203,283 209.5,277.5 299,277.5 316.5,253.75 329,253.75 334.5,250 366,250 373,252.5 382,258 434,258.5 438,262.3 447,264" fill="none" stroke="#fff" stroke-width="1.4"/>
<polyline points="146,250 149,246 161,223.75 177.75,228.75 202,249.5 209.5,251 221.5,265 249,265 256.5,267.5 266.5,278.75 271.5,279.5 281,268.25 304,268.25 311.5,261.25 334,262.5 367,262.6 377,250.6 384,248.6 410,248 423,238.6 430,247 435,260 439,265.5 447,267.5" fill="none" stroke="#f2f200" stroke-width="1.5"/>
<polyline points="867.0,129.9 876.8,129.5 887.1,116.4 892.1,116.4 899.3,113.7 911.0,124.7 915.5,124.7 921.8,128.6 940.6,128.6 945.1,130.8 958.6,130.8 970.3,120.2 982.9,120.2" fill="none" stroke="#f2f200" stroke-width="1.5"/>
<polyline points="867.0,148.7 964.9,148.7 970.3,144.8 982.9,144.8" fill="none" stroke="#fff" stroke-width="1.4"/>
<path d="M976.5 74 V315 M976.5 328.5 V336" stroke="#d8c010" stroke-width="0.8" stroke-dasharray="2.2 1.6"/>
<path d="M149.0 222.5 V242.5" stroke="#dc143c" stroke-width="0.9"/><rect x="147.0" y="227.5" width="4" height="13.8" fill="#dc143c"/><path d="M154.8 236.2 V246.2" stroke="#dc143c" stroke-width="0.9"/><rect x="152.8" y="237.5" width="4" height="2.5" fill="#dc143c"/><path d="M160.8 233.8 V243.8" stroke="#dc143c" stroke-width="0.9"/><rect x="158.8" y="238.8" width="4" height="1.8" fill="#dc143c"/><path d="M166.8 232.5 V250.0" stroke="#dc143c" stroke-width="0.9"/><rect x="164.8" y="240.0" width="4" height="8.8" fill="#dc143c"/><path d="M172.8 236.2 V253.8" stroke="#10baff" stroke-width="0.9"/><rect x="170.8" y="243.8" width="4" height="4.2" fill="#10baff"/><path d="M178.8 237.5 V256.2" stroke="#dc143c" stroke-width="0.9"/><rect x="176.8" y="243.8" width="4" height="10.0" fill="#dc143c"/><path d="M184.8 236.2 V266.2" stroke="#10baff" stroke-width="0.9"/><rect x="182.8" y="242.5" width="4" height="11.2" fill="#10baff"/><path d="M190.8 240.0 V247.5" stroke="#dc143c" stroke-width="0.9"/><rect x="188.8" y="243.0" width="4" height="2.0" fill="#dc143c"/><path d="M196.8 238.8 V246.2" stroke="#10baff" stroke-width="0.9"/><rect x="194.8" y="239.5" width="4" height="5.0" fill="#10baff"/><path d="M202.8 233.0 V246.2" stroke="#dc143c" stroke-width="0.9"/><rect x="200.8" y="238.8" width="4" height="5.8" fill="#dc143c"/><path d="M208.8 235.0 V261.2" stroke="#dc143c" stroke-width="0.9"/><rect x="206.8" y="243.8" width="4" height="16.2" fill="#dc143c"/><path d="M214.8 250.0 V280.0" stroke="#dc143c" stroke-width="0.9"/><rect x="212.8" y="257.5" width="4" height="17.5" fill="#dc143c"/><path d="M220.8 271.2 V296.2" stroke="#dc143c" stroke-width="0.9"/><rect x="218.8" y="273.8" width="4" height="15.0" fill="#dc143c"/><path d="M226.8 286.2 V298.8" stroke="#dc143c" stroke-width="0.9"/><rect x="224.8" y="287.5" width="4" height="3.0" fill="#dc143c"/><path d="M232.8 286.2 V293.8" stroke="#10baff" stroke-width="0.9"/><rect x="230.8" y="286.8" width="4" height="4.0" fill="#10baff"/><path d="M238.8 276.2 V288.8" stroke="#10baff" stroke-width="0.9"/><rect x="236.8" y="277.5" width="4" height="10.0" fill="#10baff"/><path d="M244.8 263.8 V283.8" stroke="#10baff" stroke-width="0.9"/><rect x="242.8" y="271.2" width="4" height="6.2" fill="#10baff"/><path d="M250.8 261.2 V276.2" stroke="#10baff" stroke-width="0.9"/><rect x="248.8" y="266.2" width="4" height="5.8" fill="#10baff"/><path d="M256.8 263.8 V292.5" stroke="#dc143c" stroke-width="0.9"/><rect x="254.8" y="266.2" width="4" height="15.8" fill="#dc143c"/><path d="M262.8 262.5 V282.5" stroke="#10baff" stroke-width="0.9"/><rect x="260.8" y="266.2" width="4" height="15.8" fill="#10baff"/><path d="M268.8 262.0 V277.5" stroke="#10baff" stroke-width="0.9"/><rect x="266.8" y="265.0" width="4" height="8.0" fill="#10baff"/><path d="M274.8 253.8 V266.2" stroke="#10baff" stroke-width="0.9"/><rect x="272.8" y="257.5" width="4" height="7.5" fill="#10baff"/><path d="M280.8 243.8 V263.8" stroke="#10baff" stroke-width="0.9"/><rect x="278.8" y="256.2" width="4" height="1.8" fill="#10baff"/><path d="M286.8 245.0 V276.2" stroke="#dc143c" stroke-width="0.9"/><rect x="284.8" y="255.8" width="4" height="19.2" fill="#dc143c"/><path d="M292.8 257.5 V276.2" stroke="#10baff" stroke-width="0.9"/><rect x="290.8" y="265.8" width="4" height="9.2" fill="#10baff"/><path d="M298.8 253.8 V266.2" stroke="#10baff" stroke-width="0.9"/><rect x="296.8" y="260.8" width="4" height="4.2" fill="#10baff"/><path d="M304.8 257.5 V265.0" stroke="#dc143c" stroke-width="0.9"/><rect x="302.8" y="259.5" width="4" height="3.0" fill="#dc143c"/><path d="M310.8 258.8 V271.2" stroke="#dc143c" stroke-width="0.9"/><rect x="308.8" y="262.5" width="4" height="2.5" fill="#dc143c"/><path d="M316.8 258.8 V280.5" stroke="#dc143c" stroke-width="0.9"/><rect x="314.8" y="263.8" width="4" height="16.2" fill="#dc143c"/><path d="M322.8 250.0 V280.0" stroke="#10baff" stroke-width="0.9"/><rect x="320.8" y="256.2" width="4" height="23.2" fill="#10baff"/><path d="M328.8 246.2 V262.5" stroke="#10baff" stroke-width="0.9"/><rect x="326.8" y="255.0" width="4" height="2.0" fill="#10baff"/><path d="M334.4 251.1 V257.5" stroke="#10baff" stroke-width="0.9"/><rect x="332.4" y="252.7" width="4" height="3.4" fill="#10baff"/><path d="M340.4 252.1 V266.1" stroke="#dc143c" stroke-width="0.9"/><rect x="338.4" y="253.1" width="4" height="12.0" fill="#dc143c"/><path d="M346.4 264.1 V273.1" stroke="#dc143c" stroke-width="0.9"/><rect x="344.4" y="265.1" width="4" height="6.0" fill="#dc143c"/><path d="M352.4 263.1 V278.1" stroke="#10baff" stroke-width="0.9"/><rect x="350.4" y="268.7" width="4" height="3.0" fill="#10baff"/><path d="M358.5 261.1 V278.1" stroke="#dc143c" stroke-width="0.9"/><rect x="356.5" y="268.1" width="4" height="8.0" fill="#dc143c"/><path d="M364.5 247.1 V276.1" stroke="#10baff" stroke-width="0.9"/><rect x="362.5" y="251.1" width="4" height="24.0" fill="#10baff"/><path d="M370.7 232.6 V264.1" stroke="#10baff" stroke-width="0.9"/><rect x="368.7" y="242.1" width="4" height="10.0" fill="#10baff"/><path d="M376.7 223.0 V242.7" stroke="#10baff" stroke-width="0.9"/><rect x="374.7" y="226.0" width="4" height="16.0" fill="#10baff"/><path d="M382.7 219.0 V238.0" stroke="#dc143c" stroke-width="0.9"/><rect x="380.7" y="225.0" width="4" height="8.0" fill="#dc143c"/><path d="M388.7 223.4 V241.1" stroke="#dc143c" stroke-width="0.9"/><rect x="386.7" y="233.0" width="4" height="4.0" fill="#dc143c"/><path d="M394.7 224.0 V242.1" stroke="#10baff" stroke-width="0.9"/><rect x="392.7" y="226.6" width="4" height="10.4" fill="#10baff"/><path d="M400.7 225.0 V239.0" stroke="#dc143c" stroke-width="0.9"/><rect x="398.7" y="226.6" width="4" height="11.4" fill="#dc143c"/><path d="M406.8 232.0 V240.1" stroke="#dc143c" stroke-width="0.9"/><rect x="404.8" y="235.0" width="4" height="2.4" fill="#dc143c"/><path d="M412.8 230.0 V241.1" stroke="#10baff" stroke-width="0.9"/><rect x="410.8" y="231.0" width="4" height="7.0" fill="#10baff"/><path d="M418.8 229.0 V236.0" stroke="#dc143c" stroke-width="0.9"/><rect x="416.8" y="231.0" width="4" height="4.0" fill="#dc143c"/><path d="M424.8 234.0 V257.1" stroke="#dc143c" stroke-width="0.9"/><rect x="422.8" y="235.0" width="4" height="20.0" fill="#dc143c"/><path d="M430.8 245.1 V273.1" stroke="#dc143c" stroke-width="0.9"/><rect x="428.8" y="255.1" width="4" height="14.0" fill="#dc143c"/><path d="M436.8 266.1 V306.2" stroke="#dc143c" stroke-width="0.9"/><rect x="434.8" y="269.1" width="4" height="26.1" fill="#dc143c"/><path d="M442.8 293.2 V309.2" stroke="#dc143c" stroke-width="0.9"/><rect x="440.8" y="294.8" width="4" height="9.4" fill="#dc143c"/><path d="M856.2 95.4 V108.8" stroke="#10baff" stroke-width="0.9"/><rect x="854.2" y="97.2" width="4" height="10.8" fill="#10baff"/><path d="M862.3 92.7 V106.1" stroke="#dc143c" stroke-width="0.9"/><rect x="860.3" y="97.7" width="4" height="4.9" fill="#dc143c"/><path d="M868.4 95.4 V107.9" stroke="#dc143c" stroke-width="0.9"/><rect x="866.4" y="102.2" width="4" height="4.9" fill="#dc143c"/><path d="M874.1 104.3 V113.0" stroke="#dc143c" stroke-width="0.9"/><rect x="872.1" y="107.0" width="4" height="4.9" fill="#dc143c"/><path d="M880.3 102.9 V113.7" stroke="#10baff" stroke-width="0.9"/><rect x="878.3" y="107.0" width="4" height="4.5" fill="#10baff"/><path d="M886.4 105.2 V115.1" stroke="#dc143c" stroke-width="0.9"/><rect x="884.4" y="107.0" width="4" height="3.6" fill="#dc143c"/><path d="M892.3 103.4 V120.5" stroke="#dc143c" stroke-width="0.9"/><rect x="890.3" y="110.1" width="4" height="2.9" fill="#dc143c"/><path d="M898.4 109.7 V134.0" stroke="#dc143c" stroke-width="0.9"/><rect x="896.4" y="113.0" width="4" height="16.5" fill="#dc143c"/><path d="M904.3 113.3 V140.3" stroke="#10baff" stroke-width="0.9"/><rect x="902.3" y="125.0" width="4" height="4.1" fill="#10baff"/><path d="M910.4 120.5 V155.6" stroke="#dc143c" stroke-width="0.9"/><rect x="908.4" y="125.0" width="4" height="23.4" fill="#dc143c"/><path d="M916.4 143.9 V153.8" stroke="#10baff" stroke-width="0.9"/><rect x="914.4" y="144.2" width="4" height="4.1" fill="#10baff"/><path d="M922.3 143.9 V154.7" stroke="#dc143c" stroke-width="0.9"/><rect x="920.3" y="144.8" width="4" height="2.7" fill="#dc143c"/><path d="M928.4 133.1 V153.8" stroke="#dc143c" stroke-width="0.9"/><rect x="926.4" y="147.1" width="4" height="2.5" fill="#dc143c"/><path d="M934.3 135.8 V153.8" stroke="#10baff" stroke-width="0.9"/><rect x="932.3" y="138.5" width="4" height="11.1" fill="#10baff"/><path d="M940.3 111.5 V141.2" stroke="#10baff" stroke-width="0.9"/><rect x="938.3" y="113.9" width="4" height="25.5" fill="#10baff"/><path d="M946.4 107.0 V117.8" stroke="#10baff" stroke-width="0.9"/><rect x="944.4" y="108.8" width="4" height="5.9" fill="#10baff"/><path d="M952.3 106.1 V116.6" stroke="#dc143c" stroke-width="0.9"/><rect x="950.3" y="108.8" width="4" height="5.8" fill="#dc143c"/><path d="M958.2 111.5 V119.6" stroke="#10baff" stroke-width="0.9"/><rect x="956.2" y="113.0" width="4" height="1.0" fill="#10baff"/><path d="M964.3 100.4 V120.5" stroke="#10baff" stroke-width="0.9"/><rect x="962.3" y="101.1" width="4" height="12.6" fill="#10baff"/><path d="M970.3 86.0 V111.5" stroke="#dc143c" stroke-width="0.9"/><rect x="968.3" y="101.1" width="4" height="2.3" fill="#dc143c"/><path d="M976.2 99.9 V134.5" stroke="#dc143c" stroke-width="0.9"/><rect x="974.2" y="102.9" width="4" height="29.3" fill="#dc143c"/><path d="M982.3 123.8 V132.7" stroke="#10baff" stroke-width="0.9"/><rect x="980.3" y="129.1" width="4" height="3.1" fill="#10baff"/>
<path d="M628.5 182 V187" stroke="#10baff" stroke-width="0.9"/>
<rect x="148" y="315.4" width="841" height="1.3" fill="#0000c8"/>
<rect x="148" y="313.2" width="180" height="2" fill="#4169e1"/>
<rect x="148" y="326.6" width="841" height="1.2" fill="#0000c8"/>
<rect x="148" y="336.1" width="841" height="1.2" fill="#0000c8"/>
<rect x="147.1" y="318.3" width="3.8" height="7.3" fill="#32d232"/>
<rect x="147.8" y="331.7" width="2.5" height="2.5" rx="0.6" fill="#20d020"/>
<rect x="153.1" y="318.3" width="3.8" height="7.3" fill="#32d232"/>
<rect x="153.8" y="331.7" width="2.5" height="2.5" rx="0.6" fill="#20d020"/>
<rect x="159.1" y="318.3" width="3.8" height="7.3" fill="#32d232"/>
<rect x="159.8" y="331.7" width="2.5" height="2.5" rx="0.6" fill="#20d020"/>
<rect x="165.1" y="318.3" width="3.8" height="7.3" fill="#32d232"/>
<rect x="165.8" y="331.7" width="2.5" height="2.5" rx="0.6" fill="#20d020"/>
<rect x="171.1" y="318.3" width="3.8" height="7.3" fill="#32d232"/>
<rect x="171.8" y="331.7" width="2.5" height="2.5" rx="0.6" fill="#20d020"/>
<rect x="177.1" y="318.3" width="3.8" height="7.3" fill="#32d232"/>
<rect x="177.8" y="331.7" width="2.5" height="2.5" rx="0.6" fill="#20d020"/>
<rect x="183.1" y="318.3" width="3.8" height="7.3" fill="#32d232"/>
<rect x="183.8" y="331.7" width="2.5" height="2.5" rx="0.6" fill="#20d020"/>
<rect x="189.1" y="318.3" width="3.8" height="7.3" fill="#32d232"/>
<rect x="189.8" y="331.7" width="2.5" height="2.5" rx="0.6" fill="#20d020"/>
<rect x="195.1" y="318.3" width="3.8" height="7.3" fill="#32d232"/>
<rect x="195.8" y="331.7" width="2.5" height="2.5" rx="0.6" fill="#20d020"/>
<rect x="201.1" y="318.3" width="3.8" height="7.3" fill="#32d232"/>
<rect x="201.8" y="331.7" width="2.5" height="2.5" rx="0.6" fill="#20d020"/>
<rect x="207.1" y="318.3" width="3.8" height="7.3" fill="#32d232"/>
<rect x="207.8" y="331.7" width="2.5" height="2.5" rx="0.6" fill="#20d020"/>
<rect x="213.1" y="318.3" width="3.8" height="7.3" fill="#32d232"/>
<rect x="213.8" y="331.7" width="2.5" height="2.5" rx="0.6" fill="#f01818"/>
<rect x="219.1" y="318.3" width="3.8" height="7.3" fill="#32d232"/>
<rect x="219.8" y="331.7" width="2.5" height="2.5" rx="0.6" fill="#f01818"/>
<rect x="225.1" y="318.3" width="3.8" height="7.3" fill="#32d232"/>
<rect x="225.8" y="331.7" width="2.5" height="2.5" rx="0.6" fill="#f01818"/>
<rect x="231.1" y="318.3" width="3.8" height="7.3" fill="#32d232"/>
<rect x="231.8" y="331.7" width="2.5" height="2.5" rx="0.6" fill="#f01818"/>
<rect x="237.1" y="318.3" width="3.8" height="7.3" fill="#32d232"/>
<rect x="237.8" y="331.7" width="2.5" height="2.5" rx="0.6" fill="#f01818"/>
<rect x="243.1" y="318.3" width="3.8" height="7.3" fill="#32d232"/>
<rect x="243.8" y="331.7" width="2.5" height="2.5" rx="0.6" fill="#f01818"/>
<rect x="249.1" y="318.3" width="3.8" height="7.3" fill="#32d232"/>
<rect x="249.8" y="331.7" width="2.5" height="2.5" rx="0.6" fill="#f01818"/>
<rect x="255.1" y="318.3" width="3.8" height="7.3" fill="#32d232"/>
<rect x="255.8" y="331.7" width="2.5" height="2.5" rx="0.6" fill="#f01818"/>
<rect x="261.1" y="318.3" width="3.8" height="7.3" fill="#32d232"/>
<rect x="261.8" y="331.7" width="2.5" height="2.5" rx="0.6" fill="#f01818"/>
<rect x="267.1" y="318.3" width="3.8" height="7.3" fill="#32d232"/>
<rect x="267.8" y="331.7" width="2.5" height="2.5" rx="0.6" fill="#f01818"/>
<rect x="273.1" y="318.3" width="3.8" height="7.3" fill="#32d232"/>
<rect x="273.8" y="331.7" width="2.5" height="2.5" rx="0.6" fill="#f01818"/>
<rect x="279.1" y="318.3" width="3.8" height="7.3" fill="#32d232"/>
<rect x="279.8" y="331.7" width="2.5" height="2.5" rx="0.6" fill="#f01818"/>
<rect x="285.1" y="318.3" width="3.8" height="7.3" fill="#32d232"/>
<rect x="285.8" y="331.7" width="2.5" height="2.5" rx="0.6" fill="#f01818"/>
<rect x="291.1" y="318.3" width="3.8" height="7.3" fill="#32d232"/>
<rect x="291.8" y="331.7" width="2.5" height="2.5" rx="0.6" fill="#f01818"/>
<rect x="297.1" y="318.3" width="3.8" height="7.3" fill="#32d232"/>
<rect x="297.8" y="331.7" width="2.5" height="2.5" rx="0.6" fill="#f01818"/>
<rect x="303.1" y="318.3" width="3.8" height="7.3" fill="#32d232"/>
<rect x="303.8" y="331.7" width="2.5" height="2.5" rx="0.6" fill="#f01818"/>
<rect x="309.1" y="318.3" width="3.8" height="7.3" fill="#32d232"/>
<rect x="309.8" y="331.7" width="2.5" height="2.5" rx="0.6" fill="#f01818"/>
<rect x="315.1" y="318.3" width="3.8" height="7.3" fill="#32d232"/>
<rect x="315.8" y="331.7" width="2.5" height="2.5" rx="0.6" fill="#f01818"/>
<rect x="321.1" y="318.3" width="3.8" height="7.3" fill="#32d232"/>
<rect x="321.8" y="331.7" width="2.5" height="2.5" rx="0.6" fill="#f01818"/>
<rect x="327.1" y="318.3" width="3.8" height="7.3" fill="#32d232"/>
<rect x="327.8" y="331.7" width="2.5" height="2.5" rx="0.6" fill="#f01818"/>
<rect x="333.1" y="318.3" width="3.8" height="7.3" fill="#32d232"/>
<rect x="333.8" y="331.7" width="2.5" height="2.5" rx="0.6" fill="#20d020"/>
<rect x="339.1" y="318.3" width="3.8" height="7.3" fill="#32d232"/>
<rect x="339.8" y="331.7" width="2.5" height="2.5" rx="0.6" fill="#20d020"/>
<rect x="345.1" y="318.3" width="3.8" height="7.3" fill="#32d232"/>
<rect x="345.8" y="331.7" width="2.5" height="2.5" rx="0.6" fill="#20d020"/>
<rect x="351.1" y="318.3" width="3.8" height="7.3" fill="#32d232"/>
<rect x="351.8" y="331.7" width="2.5" height="2.5" rx="0.6" fill="#20d020"/>
<rect x="357.1" y="318.3" width="3.8" height="7.3" fill="#32d232"/>
<rect x="357.8" y="331.7" width="2.5" height="2.5" rx="0.6" fill="#20d020"/>
<rect x="363.1" y="318.3" width="3.8" height="7.3" fill="#32d232"/>
<rect x="363.8" y="331.7" width="2.5" height="2.5" rx="0.6" fill="#20d020"/>
<rect x="369.1" y="318.3" width="3.8" height="7.3" fill="#32d232"/>
<rect x="369.8" y="331.7" width="2.5" height="2.5" rx="0.6" fill="#20d020"/>
<rect x="375.1" y="318.3" width="3.8" height="7.3" fill="#32d232"/>
<rect x="375.8" y="331.7" width="2.5" height="2.5" rx="0.6" fill="#20d020"/>
<rect x="381.1" y="318.3" width="3.8" height="7.3" fill="#32d232"/>
<rect x="381.8" y="331.7" width="2.5" height="2.5" rx="0.6" fill="#20d020"/>
<rect x="387.1" y="318.3" width="3.8" height="7.3" fill="#32d232"/>
<rect x="387.8" y="331.7" width="2.5" height="2.5" rx="0.6" fill="#20d020"/>
<rect x="393.1" y="318.3" width="3.8" height="7.3" fill="#32d232"/>
<rect x="393.8" y="331.7" width="2.5" height="2.5" rx="0.6" fill="#20d020"/>
<rect x="399.1" y="318.3" width="3.8" height="7.3" fill="#32d232"/>
<rect x="399.8" y="331.7" width="2.5" height="2.5" rx="0.6" fill="#20d020"/>
<rect x="405.1" y="318.3" width="3.8" height="7.3" fill="#32d232"/>
<rect x="405.8" y="331.7" width="2.5" height="2.5" rx="0.6" fill="#20d020"/>
<rect x="411.1" y="318.3" width="3.8" height="7.3" fill="#32d232"/>
<rect x="411.8" y="331.7" width="2.5" height="2.5" rx="0.6" fill="#20d020"/>
<rect x="417.1" y="318.3" width="3.8" height="7.3" fill="#32d232"/>
<rect x="417.8" y="331.7" width="2.5" height="2.5" rx="0.6" fill="#20d020"/>
<rect x="423.1" y="318.3" width="3.8" height="7.3" fill="#32d232"/>
<rect x="423.8" y="331.7" width="2.5" height="2.5" rx="0.6" fill="#20d020"/>
<rect x="429.1" y="318.3" width="3.8" height="7.3" fill="#f0f000"/>
<rect x="429.8" y="331.7" width="2.5" height="2.5" rx="0.6" fill="#f01818"/>
<rect x="435.1" y="318.3" width="3.8" height="7.3" fill="#ff1493"/>
<rect x="435.8" y="331.7" width="2.5" height="2.5" rx="0.6" fill="#f01818"/>
<rect x="441.1" y="318.3" width="3.8" height="7.3" fill="#ff1493"/>
<rect x="441.8" y="331.7" width="2.5" height="2.5" rx="0.6" fill="#f01818"/>
<rect x="447.1" y="318.3" width="3.8" height="7.3" fill="#32d232"/>
<rect x="447.8" y="331.7" width="2.5" height="2.5" rx="0.6" fill="#20d020"/>
<rect x="453.1" y="318.3" width="3.8" height="7.3" fill="#32d232"/>
<rect x="453.8" y="331.7" width="2.5" height="2.5" rx="0.6" fill="#20d020"/>
<rect x="459.1" y="318.3" width="3.8" height="7.3" fill="#32d232"/>
<rect x="459.8" y="331.7" width="2.5" height="2.5" rx="0.6" fill="#20d020"/>
<rect x="465.1" y="318.3" width="3.8" height="7.3" fill="#32d232"/>
<rect x="465.8" y="331.7" width="2.5" height="2.5" rx="0.6" fill="#20d020"/>
<rect x="471.1" y="318.3" width="3.8" height="7.3" fill="#32d232"/>
<rect x="471.8" y="331.7" width="2.5" height="2.5" rx="0.6" fill="#20d020"/>
<rect x="477.1" y="318.3" width="3.8" height="7.3" fill="#32d232"/>
<rect x="477.8" y="331.7" width="2.5" height="2.5" rx="0.6" fill="#20d020"/>
<rect x="483.1" y="318.3" width="3.8" height="7.3" fill="#32d232"/>
<rect x="483.8" y="331.7" width="2.5" height="2.5" rx="0.6" fill="#20d020"/>
<rect x="489.1" y="318.3" width="3.8" height="7.3" fill="#32d232"/>
<rect x="489.8" y="331.7" width="2.5" height="2.5" rx="0.6" fill="#20d020"/>
<rect x="495.1" y="318.3" width="3.8" height="7.3" fill="#32d232"/>
<rect x="495.8" y="331.7" width="2.5" height="2.5" rx="0.6" fill="#20d020"/>
<rect x="501.1" y="318.3" width="3.8" height="7.3" fill="#32d232"/>
<rect x="501.8" y="331.7" width="2.5" height="2.5" rx="0.6" fill="#20d020"/>
<rect x="507.1" y="318.3" width="3.8" height="7.3" fill="#32d232"/>
<rect x="507.8" y="331.7" width="2.5" height="2.5" rx="0.6" fill="#20d020"/>
<rect x="513.1" y="318.3" width="3.8" height="7.3" fill="#32d232"/>
<rect x="513.8" y="331.7" width="2.5" height="2.5" rx="0.6" fill="#20d020"/>
<rect x="519.1" y="318.3" width="3.8" height="7.3" fill="#32d232"/>
<rect x="519.8" y="331.7" width="2.5" height="2.5" rx="0.6" fill="#20d020"/>
<rect x="525.1" y="318.3" width="3.8" height="7.3" fill="#32d232"/>
<rect x="525.8" y="331.7" width="2.5" height="2.5" rx="0.6" fill="#20d020"/>
<rect x="531.1" y="318.3" width="3.8" height="7.3" fill="#32d232"/>
<rect x="531.8" y="331.7" width="2.5" height="2.5" rx="0.6" fill="#20d020"/>
<rect x="537.1" y="318.3" width="3.8" height="7.3" fill="#32d232"/>
<rect x="537.8" y="331.7" width="2.5" height="2.5" rx="0.6" fill="#20d020"/>
<rect x="543.1" y="318.3" width="3.8" height="7.3" fill="#32d232"/>
<rect x="543.8" y="331.7" width="2.5" height="2.5" rx="0.6" fill="#20d020"/>
<rect x="549.1" y="318.3" width="3.8" height="7.3" fill="#32d232"/>
<rect x="549.8" y="331.7" width="2.5" height="2.5" rx="0.6" fill="#20d020"/>
<rect x="555.1" y="318.3" width="3.8" height="7.3" fill="#32d232"/>
<rect x="555.8" y="331.7" width="2.5" height="2.5" rx="0.6" fill="#20d020"/>
<rect x="561.1" y="318.3" width="3.8" height="7.3" fill="#32d232"/>
<rect x="561.8" y="331.7" width="2.5" height="2.5" rx="0.6" fill="#20d020"/>
<rect x="567.1" y="318.3" width="3.8" height="7.3" fill="#32d232"/>
<rect x="567.8" y="331.7" width="2.5" height="2.5" rx="0.6" fill="#20d020"/>
<rect x="573.1" y="318.3" width="3.8" height="7.3" fill="#32d232"/>
<rect x="573.8" y="331.7" width="2.5" height="2.5" rx="0.6" fill="#20d020"/>
<rect x="579.1" y="318.3" width="3.8" height="7.3" fill="#32d232"/>
<rect x="579.8" y="331.7" width="2.5" height="2.5" rx="0.6" fill="#20d020"/>
<rect x="585.1" y="318.3" width="3.8" height="7.3" fill="#32d232"/>
<rect x="585.8" y="331.7" width="2.5" height="2.5" rx="0.6" fill="#20d020"/>
<rect x="591.1" y="318.3" width="3.8" height="7.3" fill="#32d232"/>
<rect x="591.8" y="331.7" width="2.5" height="2.5" rx="0.6" fill="#20d020"/>
<rect x="597.1" y="318.3" width="3.8" height="7.3" fill="#32d232"/>
<rect x="597.8" y="331.7" width="2.5" height="2.5" rx="0.6" fill="#20d020"/>
<rect x="603.1" y="318.3" width="3.8" height="7.3" fill="#32d232"/>
<rect x="603.8" y="331.7" width="2.5" height="2.5" rx="0.6" fill="#20d020"/>
<rect x="609.1" y="318.3" width="3.8" height="7.3" fill="#32d232"/>
<rect x="609.8" y="331.7" width="2.5" height="2.5" rx="0.6" fill="#20d020"/>
<rect x="615.1" y="318.3" width="3.8" height="7.3" fill="#32d232"/>
<rect x="615.8" y="331.7" width="2.5" height="2.5" rx="0.6" fill="#20d020"/>
<rect x="621.1" y="318.3" width="3.8" height="7.3" fill="#32d232"/>
<rect x="621.8" y="331.7" width="2.5" height="2.5" rx="0.6" fill="#20d020"/>
<rect x="627.1" y="318.3" width="3.8" height="7.3" fill="#32d232"/>
<rect x="627.8" y="331.7" width="2.5" height="2.5" rx="0.6" fill="#20d020"/>
<rect x="633.1" y="318.3" width="3.8" height="7.3" fill="#32d232"/>
<rect x="633.8" y="331.7" width="2.5" height="2.5" rx="0.6" fill="#20d020"/>
<rect x="639.1" y="318.3" width="3.8" height="7.3" fill="#32d232"/>
<rect x="639.8" y="331.7" width="2.5" height="2.5" rx="0.6" fill="#20d020"/>
<rect x="645.1" y="318.3" width="3.8" height="7.3" fill="#32d232"/>
<rect x="645.8" y="331.7" width="2.5" height="2.5" rx="0.6" fill="#20d020"/>
<rect x="651.1" y="318.3" width="3.8" height="7.3" fill="#32d232"/>
<rect x="651.8" y="331.7" width="2.5" height="2.5" rx="0.6" fill="#20d020"/>
<rect x="657.1" y="318.3" width="3.8" height="7.3" fill="#32d232"/>
<rect x="657.8" y="331.7" width="2.5" height="2.5" rx="0.6" fill="#20d020"/>
<rect x="663.1" y="318.3" width="3.8" height="7.3" fill="#32d232"/>
<rect x="663.8" y="331.7" width="2.5" height="2.5" rx="0.6" fill="#20d020"/>
<rect x="669.1" y="318.3" width="3.8" height="7.3" fill="#32d232"/>
<rect x="669.8" y="331.7" width="2.5" height="2.5" rx="0.6" fill="#20d020"/>
<rect x="675.1" y="318.3" width="3.8" height="7.3" fill="#32d232"/>
<rect x="675.8" y="331.7" width="2.5" height="2.5" rx="0.6" fill="#20d020"/>
<rect x="681.1" y="318.3" width="3.8" height="7.3" fill="#32d232"/>
<rect x="681.8" y="331.7" width="2.5" height="2.5" rx="0.6" fill="#20d020"/>
<rect x="687.1" y="318.3" width="3.8" height="7.3" fill="#32d232"/>
<rect x="687.8" y="331.7" width="2.5" height="2.5" rx="0.6" fill="#20d020"/>
<rect x="693.1" y="318.3" width="3.8" height="7.3" fill="#32d232"/>
<rect x="693.8" y="331.7" width="2.5" height="2.5" rx="0.6" fill="#20d020"/>
<rect x="699.1" y="318.3" width="3.8" height="7.3" fill="#32d232"/>
<rect x="699.8" y="331.7" width="2.5" height="2.5" rx="0.6" fill="#20d020"/>
<rect x="705.1" y="318.3" width="3.8" height="7.3" fill="#32d232"/>
<rect x="705.8" y="331.7" width="2.5" height="2.5" rx="0.6" fill="#20d020"/>
<rect x="711.1" y="318.3" width="3.8" height="7.3" fill="#32d232"/>
<rect x="711.8" y="331.7" width="2.5" height="2.5" rx="0.6" fill="#20d020"/>
<rect x="717.1" y="318.3" width="3.8" height="7.3" fill="#32d232"/>
<rect x="717.8" y="331.7" width="2.5" height="2.5" rx="0.6" fill="#20d020"/>
<rect x="723.1" y="318.3" width="3.8" height="7.3" fill="#32d232"/>
<rect x="723.8" y="331.7" width="2.5" height="2.5" rx="0.6" fill="#20d020"/>
<rect x="729.1" y="318.3" width="3.8" height="7.3" fill="#32d232"/>
<rect x="729.8" y="331.7" width="2.5" height="2.5" rx="0.6" fill="#20d020"/>
<rect x="735.1" y="318.3" width="3.8" height="7.3" fill="#32d232"/>
<rect x="735.8" y="331.7" width="2.5" height="2.5" rx="0.6" fill="#20d020"/>
<rect x="741.1" y="318.3" width="3.8" height="7.3" fill="#32d232"/>
<rect x="741.8" y="331.7" width="2.5" height="2.5" rx="0.6" fill="#20d020"/>
<rect x="747.1" y="318.3" width="3.8" height="7.3" fill="#32d232"/>
<rect x="747.8" y="331.7" width="2.5" height="2.5" rx="0.6" fill="#20d020"/>
<rect x="753.1" y="318.3" width="3.8" height="7.3" fill="#32d232"/>
<rect x="753.8" y="331.7" width="2.5" height="2.5" rx="0.6" fill="#20d020"/>
<rect x="759.1" y="318.3" width="3.8" height="7.3" fill="#32d232"/>
<rect x="759.8" y="331.7" width="2.5" height="2.5" rx="0.6" fill="#20d020"/>
<rect x="765.1" y="318.3" width="3.8" height="7.3" fill="#32d232"/>
<rect x="765.8" y="331.7" width="2.5" height="2.5" rx="0.6" fill="#20d020"/>
<rect x="771.1" y="318.3" width="3.8" height="7.3" fill="#32d232"/>
<rect x="771.8" y="331.7" width="2.5" height="2.5" rx="0.6" fill="#20d020"/>
<rect x="777.1" y="318.3" width="3.8" height="7.3" fill="#32d232"/>
<rect x="777.8" y="331.7" width="2.5" height="2.5" rx="0.6" fill="#20d020"/>
<rect x="783.1" y="318.3" width="3.8" height="7.3" fill="#32d232"/>
<rect x="783.8" y="331.7" width="2.5" height="2.5" rx="0.6" fill="#20d020"/>
<rect x="789.1" y="318.3" width="3.8" height="7.3" fill="#32d232"/>
<rect x="789.8" y="331.7" width="2.5" height="2.5" rx="0.6" fill="#20d020"/>
<rect x="795.1" y="318.3" width="3.8" height="7.3" fill="#32d232"/>
<rect x="795.8" y="331.7" width="2.5" height="2.5" rx="0.6" fill="#20d020"/>
<rect x="801.1" y="318.3" width="3.8" height="7.3" fill="#32d232"/>
<rect x="801.8" y="331.7" width="2.5" height="2.5" rx="0.6" fill="#20d020"/>
<rect x="807.1" y="318.3" width="3.8" height="7.3" fill="#32d232"/>
<rect x="807.8" y="331.7" width="2.5" height="2.5" rx="0.6" fill="#20d020"/>
<rect x="813.1" y="318.3" width="3.8" height="7.3" fill="#32d232"/>
<rect x="813.8" y="331.7" width="2.5" height="2.5" rx="0.6" fill="#20d020"/>
<rect x="819.1" y="318.3" width="3.8" height="7.3" fill="#32d232"/>
<rect x="819.8" y="331.7" width="2.5" height="2.5" rx="0.6" fill="#20d020"/>
<rect x="825.1" y="318.3" width="3.8" height="7.3" fill="#32d232"/>
<rect x="825.8" y="331.7" width="2.5" height="2.5" rx="0.6" fill="#20d020"/>
<rect x="831.1" y="318.3" width="3.8" height="7.3" fill="#32d232"/>
<rect x="831.8" y="331.7" width="2.5" height="2.5" rx="0.6" fill="#20d020"/>
<rect x="837.1" y="318.3" width="3.8" height="7.3" fill="#32d232"/>
<rect x="837.8" y="331.7" width="2.5" height="2.5" rx="0.6" fill="#20d020"/>
<rect x="843.1" y="318.3" width="3.8" height="7.3" fill="#32d232"/>
<rect x="843.8" y="331.7" width="2.5" height="2.5" rx="0.6" fill="#20d020"/>
<rect x="849.1" y="318.3" width="3.8" height="7.3" fill="#32d232"/>
<rect x="849.8" y="331.7" width="2.5" height="2.5" rx="0.6" fill="#20d020"/>
<rect x="855.1" y="318.3" width="3.8" height="7.3" fill="#32d232"/>
<rect x="855.8" y="331.7" width="2.5" height="2.5" rx="0.6" fill="#20d020"/>
<rect x="861.1" y="318.3" width="3.8" height="7.3" fill="#32d232"/>
<rect x="861.8" y="331.7" width="2.5" height="2.5" rx="0.6" fill="#20d020"/>
<rect x="867.1" y="318.3" width="3.8" height="7.3" fill="#32d232"/>
<rect x="867.8" y="331.7" width="2.5" height="2.5" rx="0.6" fill="#20d020"/>
<rect x="873.1" y="318.3" width="3.8" height="7.3" fill="#32d232"/>
<rect x="873.8" y="331.7" width="2.5" height="2.5" rx="0.6" fill="#20d020"/>
<rect x="879.1" y="318.3" width="3.8" height="7.3" fill="#32d232"/>
<rect x="879.8" y="331.7" width="2.5" height="2.5" rx="0.6" fill="#20d020"/>
<rect x="885.1" y="318.3" width="3.8" height="7.3" fill="#32d232"/>
<rect x="885.8" y="331.7" width="2.5" height="2.5" rx="0.6" fill="#20d020"/>
<rect x="891.1" y="318.3" width="3.8" height="7.3" fill="#32d232"/>
<rect x="891.8" y="331.7" width="2.5" height="2.5" rx="0.6" fill="#20d020"/>
<rect x="897.1" y="318.3" width="3.8" height="7.3" fill="#32d232"/>
<rect x="897.8" y="331.7" width="2.5" height="2.5" rx="0.6" fill="#20d020"/>
<rect x="903.1" y="318.3" width="3.8" height="7.3" fill="#32d232"/>
<rect x="903.8" y="331.7" width="2.5" height="2.5" rx="0.6" fill="#20d020"/>
<rect x="909.1" y="318.3" width="3.8" height="7.3" fill="#32d232"/>
<rect x="909.8" y="331.7" width="2.5" height="2.5" rx="0.6" fill="#20d020"/>
<rect x="915.1" y="318.3" width="3.8" height="7.3" fill="#32d232"/>
<rect x="915.8" y="331.7" width="2.5" height="2.5" rx="0.6" fill="#20d020"/>
<rect x="921.1" y="318.3" width="3.8" height="7.3" fill="#32d232"/>
<rect x="921.8" y="331.7" width="2.5" height="2.5" rx="0.6" fill="#20d020"/>
<rect x="927.1" y="318.3" width="3.8" height="7.3" fill="#32d232"/>
<rect x="927.8" y="331.7" width="2.5" height="2.5" rx="0.6" fill="#f01818"/>
<rect x="933.1" y="318.3" width="3.8" height="7.3" fill="#32d232"/>
<rect x="933.8" y="331.7" width="2.5" height="2.5" rx="0.6" fill="#f01818"/>
<rect x="939.1" y="318.3" width="3.8" height="7.3" fill="#32d232"/>
<rect x="939.8" y="331.7" width="2.5" height="2.5" rx="0.6" fill="#20d020"/>
<rect x="945.1" y="318.3" width="3.8" height="7.3" fill="#32d232"/>
<rect x="945.8" y="331.7" width="2.5" height="2.5" rx="0.6" fill="#20d020"/>
<rect x="951.1" y="318.3" width="3.8" height="7.3" fill="#32d232"/>
<rect x="951.8" y="331.7" width="2.5" height="2.5" rx="0.6" fill="#20d020"/>
<rect x="957.1" y="318.3" width="3.8" height="7.3" fill="#32d232"/>
<rect x="957.8" y="331.7" width="2.5" height="2.5" rx="0.6" fill="#20d020"/>
<rect x="963.1" y="318.3" width="3.8" height="7.3" fill="#32d232"/>
<rect x="963.8" y="331.7" width="2.5" height="2.5" rx="0.6" fill="#20d020"/>
<rect x="969.1" y="318.3" width="3.8" height="7.3" fill="#32d232"/>
<rect x="969.8" y="331.7" width="2.5" height="2.5" rx="0.6" fill="#20d020"/>
<rect x="975.1" y="318.3" width="3.8" height="7.3" fill="#32d232"/>
<rect x="975.8" y="331.7" width="2.5" height="2.5" rx="0.6" fill="#20d020"/>
<rect x="981.1" y="318.3" width="3.8" height="7.3" fill="#32d232"/>
<rect x="981.8" y="331.7" width="2.5" height="2.5" rx="0.6" fill="#20d020"/>
<text id="il1" x="149.5" y="325.8" font-size="6.8" fill="#0000b8">UPL Xmas Breakout Scan (2,60)</text>
<text id="il2" x="149.5" y="336.3" font-size="6.8" fill="#0000b8">!!!-MT4 X-FILE v13.14.2 Scal ... SIG: 1162     Zoho 47 0000</text>
<rect x="147.2" y="73.0" width="842.4" height="1.3" fill="#0000d0"/>
<rect x="147.2" y="73.0" width="1.4" height="264.4" fill="#0000d0"/>
<rect x="988" y="73.0" width="1.1" height="264.4" fill="#0000d8"/>
<rect x="989" y="90.5" width="1.6" height="1" fill="#0000c8"/>
<text x="993" y="93.8" font-size="6.9" fill="#0000d8">1.42240</text>
<rect x="989" y="115.2" width="1.6" height="1" fill="#0000c8"/>
<text x="993" y="118.5" font-size="6.9" fill="#0000d8">1.41760</text>
<rect x="989" y="139.9" width="1.6" height="1" fill="#0000c8"/>
<text x="993" y="143.2" font-size="6.9" fill="#0000d8">1.41280</text>
<rect x="989" y="164.7" width="1.6" height="1" fill="#0000c8"/>
<text x="993" y="168.0" font-size="6.9" fill="#0000d8">1.40800</text>
<rect x="989" y="189.4" width="1.6" height="1" fill="#0000c8"/>
<text x="993" y="192.7" font-size="6.9" fill="#0000d8">1.40320</text>
<rect x="989" y="214.1" width="1.6" height="1" fill="#0000c8"/>
<text x="993" y="217.4" font-size="6.9" fill="#0000d8">1.39840</text>
<rect x="989" y="238.8" width="1.6" height="1" fill="#0000c8"/>
<text x="993" y="242.1" font-size="6.9" fill="#0000d8">1.39360</text>
<rect x="989" y="263.5" width="1.6" height="1" fill="#0000c8"/>
<text x="993" y="266.8" font-size="6.9" fill="#0000d8">1.38880</text>
<rect x="989" y="288.3" width="1.6" height="1" fill="#0000c8"/>
<text x="993" y="291.6" font-size="6.9" fill="#0000d8">1.38400</text>
<rect x="989" y="313.0" width="1.6" height="1" fill="#0000c8"/>
<text x="993" y="316.3" font-size="6.9" fill="#0000d8">1.37920</text>
<rect x="990" y="125" width="30" height="9" fill="#0000ff"/>
<text x="993" y="132.3" font-size="6.9" fill="#08083a" stroke="#5a5aff" stroke-width="0.25">1.41496</text>
<text x="992" y="324.5" font-size="7" fill="#0000d8">9</text>
<text x="991" y="334.5" font-size="7" fill="#0000d8">90</text>
<path d="M151.5 77.8 L156.5 77.8 L154 80.8 Z" fill="#0000f0"/>
<text id="charthdr" x="159" y="82.3" font-size="6.8" fill="#0000e0">GBPUSD,H4  1.41445 1.41592 1.41436 1.41496</text>
<path d="M824.5 74 L830.5 74 L827.5 77.5 Z" fill="#a8b4d8"/>
<rect x="147.5" y="337" width="1" height="2.2" fill="#0000c8"/>
<text x="148.5" y="346.8" font-size="6.7" fill="#0000d8" class="dl">20 Apr 2021</text>
<rect x="195.5" y="337" width="1" height="2.2" fill="#0000c8"/>
<text x="196.5" y="346.8" font-size="6.7" fill="#0000d8" class="dl">22 Apr 00:00</text>
<rect x="243.5" y="337" width="1" height="2.2" fill="#0000c8"/>
<text x="244.5" y="346.8" font-size="6.7" fill="#0000d8" class="dl">23 Apr 08:00</text>
<rect x="291.5" y="337" width="1" height="2.2" fill="#0000c8"/>
<text x="292.5" y="346.8" font-size="6.7" fill="#0000d8" class="dl">26 Apr 16:00</text>
<rect x="339.5" y="337" width="1" height="2.2" fill="#0000c8"/>
<text x="340.5" y="346.8" font-size="6.7" fill="#0000d8" class="dl">28 Apr 00:00</text>
<rect x="387.5" y="337" width="1" height="2.2" fill="#0000c8"/>
<text x="388.5" y="346.8" font-size="6.7" fill="#0000d8" class="dl">29 Apr 08:00</text>
<rect x="435.5" y="337" width="1" height="2.2" fill="#0000c8"/>
<text x="436.5" y="346.8" font-size="6.7" fill="#0000d8" class="dl">30 Apr 16:00</text>
<rect x="483.5" y="337" width="1" height="2.2" fill="#0000c8"/>
<text x="484.5" y="346.8" font-size="6.7" fill="#0000d8" class="dl">4 May 00:00</text>
<rect x="531.5" y="337" width="1" height="2.2" fill="#0000c8"/>
<text x="532.5" y="346.8" font-size="6.7" fill="#0000d8" class="dl">5 May 08:00</text>
<rect x="579.5" y="337" width="1" height="2.2" fill="#0000c8"/>
<text x="580.5" y="346.8" font-size="6.7" fill="#0000d8" class="dl">6 May 16:00</text>
<rect x="627.5" y="337" width="1" height="2.2" fill="#0000c8"/>
<text x="628.5" y="346.8" font-size="6.7" fill="#0000d8" class="dl">10 May 00:00</text>
<rect x="675.5" y="337" width="1" height="2.2" fill="#0000c8"/>
<text x="676.5" y="346.8" font-size="6.7" fill="#0000d8" class="dl">11 May 08:00</text>
<rect x="723.5" y="337" width="1" height="2.2" fill="#0000c8"/>
<text x="724.5" y="346.8" font-size="6.7" fill="#0000d8" class="dl">12 May 16:00</text>
<rect x="771.5" y="337" width="1" height="2.2" fill="#0000c8"/>
<text x="772.5" y="346.8" font-size="6.7" fill="#0000d8" class="dl">14 May 00:00</text>
<rect x="819.5" y="337" width="1" height="2.2" fill="#0000c8"/>
<text x="820.5" y="346.8" font-size="6.7" fill="#0000d8" class="dl">17 May 08:00</text>
<rect x="867.5" y="337" width="1" height="2.2" fill="#0000c8"/>
<text x="868.5" y="346.8" font-size="6.7" fill="#0000d8" class="dl">18 May 16:00</text>
<rect x="915.5" y="337" width="1" height="2.2" fill="#0000c8"/>
<text x="916.5" y="346.8" font-size="6.7" fill="#0000d8" class="dl">20 May 00:00</text>
<rect x="963.5" y="337" width="1" height="2.2" fill="#0000c8"/>
<text x="964.5" y="346.8" font-size="6.7" fill="#0000d8" class="dl">21 May 08:00</text>
</svg>
<div class="a" style="left:145px;top:352.5px;width:879px;height:1px;background:#808080"></div>
<div class="a" style="left:149.5px;top:353px;width:58.5px;height:14.5px;background:#fff;border:1px solid #404040;border-top:none"></div>
<div class="t" id="ctab0" style="left:157px;top:355.5px;font-size:8.3px;letter-spacing:-0.55px;color:#111">GBPUSD,H4</div>
<div class="t" id="ctab1" style="left:217.5px;top:355.5px;font-size:8.3px;letter-spacing:-0.55px;color:#555">YM,H1</div>
<div class="t" id="ctab2" style="left:258.5px;top:355.5px;font-size:8.3px;letter-spacing:-0.55px;color:#555">BRN,H1</div>
<div class="t" id="ctab3" style="left:304.5px;top:355.5px;font-size:8.3px;letter-spacing:-0.55px;color:#555">XAUUSD,H1</div>
<div class="t" id="ctab4" style="left:364.5px;top:355.5px;font-size:8.3px;letter-spacing:-0.55px;color:#555">USDCHF,H1</div>
<div class="t" id="ctab5" style="left:423px;top:355.5px;font-size:8.3px;letter-spacing:-0.55px;color:#555">USDJPY,H1</div>
<div class="a" style="left:251.5px;top:356px;width:1px;height:9px;background:#666"></div>
<div class="a" style="left:296px;top:356px;width:1px;height:9px;background:#666"></div>
<div class="a" style="left:355.5px;top:356px;width:1px;height:9px;background:#666"></div>
<div class="a" style="left:416px;top:356px;width:1px;height:9px;background:#666"></div>
<svg class="a" style="left:998px;top:357px" width="22" height="7"><path d="M4 0.5 L1 3.5 L4 6.5 Z M15 0.5 L18 3.5 L15 6.5 Z" fill="#9a968e"/></svg>
<div class="a" style="left:0;top:368.5px;width:1024px;height:1px;background:#fff"></div>
<div class="a" style="left:0;top:370.5px;width:1024px;height:1px;background:#a09c94"></div>
<div class="a" style="left:1px;top:383px;width:9.5px;height:147px;background:#a6a49f"></div>
<svg class="a" style="left:3px;top:373.3px" width="5" height="5" viewBox="0 0 5 5" ><path d="M0.5 0.5 L4.5 4.5 M4.5 0.5 L0.5 4.5" stroke="#111" stroke-width="1.1"/></svg>
<div class="a" id="termv" style="left:0.5px;top:526px;transform-origin:0 0;transform:rotate(-90deg);font-size:8.4px;color:#d4d2cc;line-height:10px;letter-spacing:0.3px">Терминал</div>
<div class="a" style="left:11.5px;top:372.5px;width:1010px;height:141.5px;background:#fff;border:1px solid;border-color:#808080 #fff #404040 #808080"></div>
<div class="a" style="left:12.5px;top:373px;width:179.5px;height:12.5px;background:#d6d2cb;border:1px solid;border-color:#fff #6a6862 #6a6862 #fff"></div>
<div class="t" style="left:18.0px;top:374.5px;font-size:8.4px;color:#222">Имя</div>
<div class="a" style="left:192.5px;top:373px;width:680.5px;height:12.5px;background:#d6d2cb;border:1px solid;border-color:#fff #6a6862 #6a6862 #fff"></div>
<div class="t" style="left:198.5px;top:374.5px;font-size:8.4px;color:#222">Описание</div>
<div class="a" style="left:873.5px;top:373px;width:75px;height:12.5px;background:#d6d2cb;border:1px solid;border-color:#fff #6a6862 #6a6862 #fff"></div>
<div class="t" style="left:880.0px;top:374.5px;font-size:8.4px;color:#222">Рейтинг</div>
<div class="a" style="left:949px;top:373px;width:60px;height:12.5px;background:#d6d2cb;border:1px solid;border-color:#fff #6a6862 #6a6862 #fff"></div>
<div class="t" style="left:967.5px;top:374.5px;font-size:8.4px;color:#222">Дата</div>
<svg class="a" style="left:996.5px;top:376.5px" width="6" height="6" viewBox="0 0 6 6" ><path d="M0.5 0.5 H5.5 L3 5.5 Z" fill="none" stroke="#aaa" stroke-width="0.8"/></svg>
<div class="a" style="left:12.5px;top:386px;width:996.5px;height:15px;background:#fff;border-bottom:1px solid #dedede;overflow:hidden"></div>
<svg class="a" style="left:14.5px;top:389px" width="9" height="9" viewBox="0 0 9 9" ><path d="M0.8 1.9 H8.2" stroke="#2a56a0" stroke-width="1.1"/><rect x="2.6" y="0.3" width="3.8" height="1.4" fill="#3f74c4"/><circle cx="4.5" cy="3.4" r="1.5" fill="#e8f0fb" stroke="#3a6cba" stroke-width="0.7"/><path d="M0.9 8.3 L2.2 5.2 H6.8 L8.1 8.3 Z" fill="#4a84d8" stroke="#2a56a0" stroke-width="0.6"/><path d="M4.5 5.4 V8" stroke="#dbe8fa" stroke-width="0.9"/></svg>
<div class="t trn" id="trn0" style="left:27.5px;top:388.5px;font-size:8.4px;letter-spacing:-0.266px;color:#111">cm-Close Far Loss</div>
<div class="t trd" id="trd0" style="left:194.7px;top:388.5px;font-size:8.4px;letter-spacing:-0.170px;color:#111;width:676px;overflow:hidden">Советник закрывает самую убыточную позицию за счет прибыльных позиций с учетом заданной прибыли</div>
<div class="t" style="left:949px;width:57.3px;text-align:right;top:388.5px;font-size:8.4px;letter-spacing:-0.07px;color:#111">2021.05.11</div>
<svg class="a" style="left:876.4px;top:389px" width="8.5" height="8.5" viewBox="0 0 8.5 8.5" ><path d="M4.2 0.4 L5.4 2.9 L8.1 3.2 L6.1 5.1 L6.7 7.9 L4.2 6.5 L1.7 7.9 L2.3 5.1 L0.3 3.2 L3 2.9 Z" fill="#f9e08a" stroke="#d8a84c" stroke-width="0.7"/></svg>
<svg class="a" style="left:889.9px;top:389px" width="8.5" height="8.5" viewBox="0 0 8.5 8.5" ><path d="M4.2 0.4 L5.4 2.9 L8.1 3.2 L6.1 5.1 L6.7 7.9 L4.2 6.5 L1.7 7.9 L2.3 5.1 L0.3 3.2 L3 2.9 Z" fill="#f9e08a" stroke="#d8a84c" stroke-width="0.7"/></svg>
<svg class="a" style="left:903.4px;top:389px" width="8.5" height="8.5" viewBox="0 0 8.5 8.5" ><path d="M4.2 0.4 L5.4 2.9 L8.1 3.2 L6.1 5.1 L6.7 7.9 L4.2 6.5 L1.7 7.9 L2.3 5.1 L0.3 3.2 L3 2.9 Z" fill="#fff" stroke="#b4b4b4" stroke-width="0.7"/><clipPath id="h903389"><rect x="0" y="0" width="4.2" height="9"/></clipPath><path d="M4.2 0.4 L5.4 2.9 L8.1 3.2 L6.1 5.1 L6.7 7.9 L4.2 6.5 L1.7 7.9 L2.3 5.1 L0.3 3.2 L3 2.9 Z" fill="#f9e08a" stroke="#d8a84c" stroke-width="0.7" clip-path="url(#h903389)"/></svg>
<svg class="a" style="left:916.9px;top:389px" width="8.5" height="8.5" viewBox="0 0 8.5 8.5" ><path d="M4.2 0.4 L5.4 2.9 L8.1 3.2 L6.1 5.1 L6.7 7.9 L4.2 6.5 L1.7 7.9 L2.3 5.1 L0.3 3.2 L3 2.9 Z" fill="#fff" stroke="#b4b4b4" stroke-width="0.7"/></svg>
<svg class="a" style="left:930.4px;top:389px" width="8.5" height="8.5" viewBox="0 0 8.5 8.5" ><path d="M4.2 0.4 L5.4 2.9 L8.1 3.2 L6.1 5.1 L6.7 7.9 L4.2 6.5 L1.7 7.9 L2.3 5.1 L0.3 3.2 L3 2.9 Z" fill="#fff" stroke="#b4b4b4" stroke-width="0.7"/></svg>
<div class="a" style="left:12.5px;top:401px;width:996.5px;height:15px;background:#ececec;border-bottom:1px solid #dedede;overflow:hidden"></div>
<svg class="a" style="left:14.5px;top:404px" width="9" height="9" viewBox="0 0 9 9" ><path d="M0.8 1.9 H8.2" stroke="#2a56a0" stroke-width="1.1"/><rect x="2.6" y="0.3" width="3.8" height="1.4" fill="#3f74c4"/><circle cx="4.5" cy="3.4" r="1.5" fill="#e8f0fb" stroke="#3a6cba" stroke-width="0.7"/><path d="M0.9 8.3 L2.2 5.2 H6.8 L8.1 8.3 Z" fill="#4a84d8" stroke="#2a56a0" stroke-width="0.6"/><path d="M4.5 5.4 V8" stroke="#dbe8fa" stroke-width="0.9"/></svg>
<div class="t trn" id="trn1" style="left:27.5px;top:403.5px;font-size:8.4px;letter-spacing:-0.580px;color:#111">Lock SL</div>
<div class="t trd" id="trd1" style="left:194.7px;top:403.5px;font-size:8.4px;letter-spacing:-0.164px;color:#111;width:676px;overflow:hidden">Автоматическая установка лока на SL открытой позиции</div>
<div class="t" style="left:949px;width:57.3px;text-align:right;top:403.5px;font-size:8.4px;letter-spacing:-0.07px;color:#111">2021.04.16</div>
<svg class="a" style="left:876.4px;top:404px" width="8.5" height="8.5" viewBox="0 0 8.5 8.5" ><path d="M4.2 0.4 L5.4 2.9 L8.1 3.2 L6.1 5.1 L6.7 7.9 L4.2 6.5 L1.7 7.9 L2.3 5.1 L0.3 3.2 L3 2.9 Z" fill="#f9e08a" stroke="#d8a84c" stroke-width="0.7"/></svg>
<svg class="a" style="left:889.9px;top:404px" width="8.5" height="8.5" viewBox="0 0 8.5 8.5" ><path d="M4.2 0.4 L5.4 2.9 L8.1 3.2 L6.1 5.1 L6.7 7.9 L4.2 6.5 L1.7 7.9 L2.3 5.1 L0.3 3.2 L3 2.9 Z" fill="#f9e08a" stroke="#d8a84c" stroke-width="0.7"/></svg>
<svg class="a" style="left:903.4px;top:404px" width="8.5" height="8.5" viewBox="0 0 8.5 8.5" ><path d="M4.2 0.4 L5.4 2.9 L8.1 3.2 L6.1 5.1 L6.7 7.9 L4.2 6.5 L1.7 7.9 L2.3 5.1 L0.3 3.2 L3 2.9 Z" fill="#f9e08a" stroke="#d8a84c" stroke-width="0.7"/></svg>
<svg class="a" style="left:916.9px;top:404px" width="8.5" height="8.5" viewBox="0 0 8.5 8.5" ><path d="M4.2 0.4 L5.4 2.9 L8.1 3.2 L6.1 5.1 L6.7 7.9 L4.2 6.5 L1.7 7.9 L2.3 5.1 L0.3 3.2 L3 2.9 Z" fill="#fff" stroke="#b4b4b4" stroke-width="0.7"/></svg>
<svg class="a" style="left:930.4px;top:404px" width="8.5" height="8.5" viewBox="0 0 8.5 8.5" ><path d="M4.2 0.4 L5.4 2.9 L8.1 3.2 L6.1 5.1 L6.7 7.9 L4.2 6.5 L1.7 7.9 L2.3 5.1 L0.3 3.2 L3 2.9 Z" fill="#fff" stroke="#b4b4b4" stroke-width="0.7"/></svg>
<div class="a" style="left:12.5px;top:416px;width:996.5px;height:15px;background:#fff;border-bottom:1px solid #dedede;overflow:hidden"></div>
<svg class="a" style="left:14.5px;top:419px" width="9" height="9" viewBox="0 0 9 9" ><rect x="0.9" y="0.9" width="7" height="7" rx="0.6" fill="#f9e27a" stroke="#dcb94a" stroke-width="0.7"/><rect x="1.4" y="1.4" width="6" height="2.4" fill="#fdf3b8" opacity="0.8"/><path d="M2.8 6.6 L6.2 2.2 M3.6 4.6 H6" stroke="#8a3418" stroke-width="0.9" fill="none"/></svg>
<div class="t trn" id="trn2" style="left:27.5px;top:418.5px;font-size:8.4px;letter-spacing:-0.270px;color:#111">Стрелки в МТ4</div>
<div class="t trd" id="trd2" style="left:194.7px;top:418.5px;font-size:8.4px;letter-spacing:-0.163px;color:#111;width:676px;overflow:hidden">Рисование стрелок в МТ4</div>
<div class="t" style="left:949px;width:57.3px;text-align:right;top:418.5px;font-size:8.4px;letter-spacing:-0.07px;color:#111">2021.04.08</div>
<svg class="a" style="left:876.4px;top:419px" width="8.5" height="8.5" viewBox="0 0 8.5 8.5" ><path d="M4.2 0.4 L5.4 2.9 L8.1 3.2 L6.1 5.1 L6.7 7.9 L4.2 6.5 L1.7 7.9 L2.3 5.1 L0.3 3.2 L3 2.9 Z" fill="#f9e08a" stroke="#d8a84c" stroke-width="0.7"/></svg>
<svg class="a" style="left:889.9px;top:419px" width="8.5" height="8.5" viewBox="0 0 8.5 8.5" ><path d="M4.2 0.4 L5.4 2.9 L8.1 3.2 L6.1 5.1 L6.7 7.9 L4.2 6.5 L1.7 7.9 L2.3 5.1 L0.3 3.2 L3 2.9 Z" fill="#f9e08a" stroke="#d8a84c" stroke-width="0.7"/></svg>
<svg class="a" style="left:903.4px;top:419px" width="8.5" height="8.5" viewBox="0 0 8.5 8.5" ><path d="M4.2 0.4 L5.4 2.9 L8.1 3.2 L6.1 5.1 L6.7 7.9 L4.2 6.5 L1.7 7.9 L2.3 5.1 L0.3 3.2 L3 2.9 Z" fill="#f9e08a" stroke="#d8a84c" stroke-width="0.7"/></svg>
<svg class="a" style="left:916.9px;top:419px" width="8.5" height="8.5" viewBox="0 0 8.5 8.5" ><path d="M4.2 0.4 L5.4 2.9 L8.1 3.2 L6.1 5.1 L6.7 7.9 L4.2 6.5 L1.7 7.9 L2.3 5.1 L0.3 3.2 L3 2.9 Z" fill="#fff" stroke="#b4b4b4" stroke-width="0.7"/><clipPath id="h916419"><rect x="0" y="0" width="4.2" height="9"/></clipPath><path d="M4.2 0.4 L5.4 2.9 L8.1 3.2 L6.1 5.1 L6.7 7.9 L4.2 6.5 L1.7 7.9 L2.3 5.1 L0.3 3.2 L3 2.9 Z" fill="#f9e08a" stroke="#d8a84c" stroke-width="0.7" clip-path="url(#h916419)"/></svg>
<svg class="a" style="left:930.4px;top:419px" width="8.5" height="8.5" viewBox="0 0 8.5 8.5" ><path d="M4.2 0.4 L5.4 2.9 L8.1 3.2 L6.1 5.1 L6.7 7.9 L4.2 6.5 L1.7 7.9 L2.3 5.1 L0.3 3.2 L3 2.9 Z" fill="#fff" stroke="#b4b4b4" stroke-width="0.7"/></svg>
<div class="a" style="left:12.5px;top:431px;width:996.5px;height:15px;background:#ececec;border-bottom:1px solid #dedede;overflow:hidden"></div>
<svg class="a" style="left:14.5px;top:434px" width="9" height="9" viewBox="0 0 9 9" ><rect x="0.9" y="0.9" width="7" height="7" rx="0.6" fill="#f9e27a" stroke="#dcb94a" stroke-width="0.7"/><rect x="1.4" y="1.4" width="6" height="2.4" fill="#fdf3b8" opacity="0.8"/><path d="M2.8 6.6 L6.2 2.2 M3.6 4.6 H6" stroke="#8a3418" stroke-width="0.9" fill="none"/></svg>
<div class="t trn" id="trn3" style="left:27.5px;top:433.5px;font-size:8.4px;letter-spacing:-0.551px;color:#111">Boa</div>
<div class="t trd" id="trd3" style="left:194.7px;top:433.5px;font-size:8.4px;letter-spacing:-0.165px;color:#111;width:676px;overflow:hidden">Индикатор направления тренда.</div>
<div class="t" style="left:949px;width:57.3px;text-align:right;top:433.5px;font-size:8.4px;letter-spacing:-0.07px;color:#111">2021.04.02</div>
<svg class="a" style="left:876.4px;top:434px" width="8.5" height="8.5" viewBox="0 0 8.5 8.5" ><path d="M4.2 0.4 L5.4 2.9 L8.1 3.2 L6.1 5.1 L6.7 7.9 L4.2 6.5 L1.7 7.9 L2.3 5.1 L0.3 3.2 L3 2.9 Z" fill="#f9e08a" stroke="#d8a84c" stroke-width="0.7"/></svg>
<svg class="a" style="left:889.9px;top:434px" width="8.5" height="8.5" viewBox="0 0 8.5 8.5" ><path d="M4.2 0.4 L5.4 2.9 L8.1 3.2 L6.1 5.1 L6.7 7.9 L4.2 6.5 L1.7 7.9 L2.3 5.1 L0.3 3.2 L3 2.9 Z" fill="#f9e08a" stroke="#d8a84c" stroke-width="0.7"/></svg>
<svg class="a" style="left:903.4px;top:434px" width="8.5" height="8.5" viewBox="0 0 8.5 8.5" ><path d="M4.2 0.4 L5.4 2.9 L8.1 3.2 L6.1 5.1 L6.7 7.9 L4.2 6.5 L1.7 7.9 L2.3 5.1 L0.3 3.2 L3 2.9 Z" fill="#f9e08a" stroke="#d8a84c" stroke-width="0.7"/></svg>
<svg class="a" style="left:916.9px;top:434px" width="8.5" height="8.5" viewBox="0 0 8.5 8.5" ><path d="M4.2 0.4 L5.4 2.9 L8.1 3.2 L6.1 5.1 L6.7 7.9 L4.2 6.5 L1.7 7.9 L2.3 5.1 L0.3 3.2 L3 2.9 Z" fill="#fff" stroke="#b4b4b4" stroke-width="0.7"/></svg>
<svg class="a" style="left:930.4px;top:434px" width="8.5" height="8.5" viewBox="0 0 8.5 8.5" ><path d="M4.2 0.4 L5.4 2.9 L8.1 3.2 L6.1 5.1 L6.7 7.9 L4.2 6.5 L1.7 7.9 L2.3 5.1 L0.3 3.2 L3 2.9 Z" fill="#fff" stroke="#b4b4b4" stroke-width="0.7"/></svg>
<div class="a" style="left:12.5px;top:446px;width:996.5px;height:15px;background:#fff;border-bottom:1px solid #dedede;overflow:hidden"></div>
<svg class="a" style="left:14.5px;top:449px" width="9" height="9" viewBox="0 0 9 9" ><path d="M1 1.2 H5.6 Q6.6 1.2 6.6 2.4 V5.4 H8.3 V6.8 Q8.3 8 7 8 H3 V3.2 Q3 2.2 1 2.2 Z" fill="#f8dc6a" stroke="#c8982a" stroke-width="0.7"/><path d="M3 5.6 H6.4" stroke="#c8982a" stroke-width="0.5"/></svg>
<div class="t trn" id="trn4" style="left:27.5px;top:448.5px;font-size:8.4px;letter-spacing:-0.047px;color:#111">Close positions Delete orders Delete tra...</div>
<div class="t trd" id="trd4" style="left:194.7px;top:448.5px;font-size:8.4px;letter-spacing:-0.176px;color:#111;width:676px;overflow:hidden">Закрывает позиции по символу,удаляет ордера по символу,удаляет трал по символу, работает на всех ордерах и позициях (с # в имени).</div>
<div class="t" style="left:949px;width:57.3px;text-align:right;top:448.5px;font-size:8.4px;letter-spacing:-0.07px;color:#111">2021.04.01</div>
<svg class="a" style="left:876.4px;top:449px" width="8.5" height="8.5" viewBox="0 0 8.5 8.5" ><path d="M4.2 0.4 L5.4 2.9 L8.1 3.2 L6.1 5.1 L6.7 7.9 L4.2 6.5 L1.7 7.9 L2.3 5.1 L0.3 3.2 L3 2.9 Z" fill="#f9e08a" stroke="#d8a84c" stroke-width="0.7"/></svg>
<svg class="a" style="left:889.9px;top:449px" width="8.5" height="8.5" viewBox="0 0 8.5 8.5" ><path d="M4.2 0.4 L5.4 2.9 L8.1 3.2 L6.1 5.1 L6.7 7.9 L4.2 6.5 L1.7 7.9 L2.3 5.1 L0.3 3.2 L3 2.9 Z" fill="#f9e08a" stroke="#d8a84c" stroke-width="0.7"/></svg>
<svg class="a" style="left:903.4px;top:449px" width="8.5" height="8.5" viewBox="0 0 8.5 8.5" ><path d="M4.2 0.4 L5.4 2.9 L8.1 3.2 L6.1 5.1 L6.7 7.9 L4.2 6.5 L1.7 7.9 L2.3 5.1 L0.3 3.2 L3 2.9 Z" fill="#fff" stroke="#b4b4b4" stroke-width="0.7"/></svg>
<svg class="a" style="left:916.9px;top:449px" width="8.5" height="8.5" viewBox="0 0 8.5 8.5" ><path d="M4.2 0.4 L5.4 2.9 L8.1 3.2 L6.1 5.1 L6.7 7.9 L4.2 6.5 L1.7 7.9 L2.3 5.1 L0.3 3.2 L3 2.9 Z" fill="#fff" stroke="#b4b4b4" stroke-width="0.7"/></svg>
<svg class="a" style="left:930.4px;top:449px" width="8.5" height="8.5" viewBox="0 0 8.5 8.5" ><path d="M4.2 0.4 L5.4 2.9 L8.1 3.2 L6.1 5.1 L6.7 7.9 L4.2 6.5 L1.7 7.9 L2.3 5.1 L0.3 3.2 L3 2.9 Z" fill="#fff" stroke="#b4b4b4" stroke-width="0.7"/></svg>
<div class="a" style="left:12.5px;top:461px;width:996.5px;height:15px;background:#ececec;border-bottom:1px solid #dedede;overflow:hidden"></div>
<svg class="a" style="left:14.5px;top:464px" width="9" height="9" viewBox="0 0 9 9" ><rect x="0.9" y="0.9" width="7" height="7" rx="0.6" fill="#f9e27a" stroke="#dcb94a" stroke-width="0.7"/><rect x="1.4" y="1.4" width="6" height="2.4" fill="#fdf3b8" opacity="0.8"/><path d="M2.8 6.6 L6.2 2.2 M3.6 4.6 H6" stroke="#8a3418" stroke-width="0.9" fill="none"/></svg>
<div class="t trn" id="trn5" style="left:27.5px;top:463.5px;font-size:8.4px;letter-spacing:-0.130px;color:#111">Trend direction and force - DSEMA smo...</div>
<div class="t trd" id="trd5" style="left:194.7px;top:463.5px;font-size:8.4px;letter-spacing:-0.223px;color:#111;width:676px;overflow:hidden">Версия для МТ4 индикатора от Mladen Rakic</div>
<div class="t" style="left:949px;width:57.3px;text-align:right;top:463.5px;font-size:8.4px;letter-spacing:-0.07px;color:#111">2021.03.22</div>
<svg class="a" style="left:876.4px;top:464px" width="8.5" height="8.5" viewBox="0 0 8.5 8.5" ><path d="M4.2 0.4 L5.4 2.9 L8.1 3.2 L6.1 5.1 L6.7 7.9 L4.2 6.5 L1.7 7.9 L2.3 5.1 L0.3 3.2 L3 2.9 Z" fill="#f9e08a" stroke="#d8a84c" stroke-width="0.7"/></svg>
<svg class="a" style="left:889.9px;top:464px" width="8.5" height="8.5" viewBox="0 0 8.5 8.5" ><path d="M4.2 0.4 L5.4 2.9 L8.1 3.2 L6.1 5.1 L6.7 7.9 L4.2 6.5 L1.7 7.9 L2.3 5.1 L0.3 3.2 L3 2.9 Z" fill="#f9e08a" stroke="#d8a84c" stroke-width="0.7"/></svg>
<svg class="a" style="left:903.4px;top:464px" width="8.5" height="8.5" viewBox="0 0 8.5 8.5" ><path d="M4.2 0.4 L5.4 2.9 L8.1 3.2 L6.1 5.1 L6.7 7.9 L4.2 6.5 L1.7 7.9 L2.3 5.1 L0.3 3.2 L3 2.9 Z" fill="#f9e08a" stroke="#d8a84c" stroke-width="0.7"/></svg>
<svg class="a" style="left:916.9px;top:464px" width="8.5" height="8.5" viewBox="0 0 8.5 8.5" ><path d="M4.2 0.4 L5.4 2.9 L8.1 3.2 L6.1 5.1 L6.7 7.9 L4.2 6.5 L1.7 7.9 L2.3 5.1 L0.3 3.2 L3 2.9 Z" fill="#fff" stroke="#b4b4b4" stroke-width="0.7"/><clipPath id="h916464"><rect x="0" y="0" width="4.2" height="9"/></clipPath><path d="M4.2 0.4 L5.4 2.9 L8.1 3.2 L6.1 5.1 L6.7 7.9 L4.2 6.5 L1.7 7.9 L2.3 5.1 L0.3 3.2 L3 2.9 Z" fill="#f9e08a" stroke="#d8a84c" stroke-width="0.7" clip-path="url(#h916464)"/></svg>
<svg class="a" style="left:930.4px;top:464px" width="8.5" height="8.5" viewBox="0 0 8.5 8.5" ><path d="M4.2 0.4 L5.4 2.9 L8.1 3.2 L6.1 5.1 L6.7 7.9 L4.2 6.5 L1.7 7.9 L2.3 5.1 L0.3 3.2 L3 2.9 Z" fill="#fff" stroke="#b4b4b4" stroke-width="0.7"/></svg>
<div class="a" style="left:12.5px;top:476px;width:996.5px;height:15px;background:#fff;border-bottom:1px solid #dedede;overflow:hidden"></div>
<svg class="a" style="left:14.5px;top:479px" width="9" height="9" viewBox="0 0 9 9" ><path d="M0.8 1.9 H8.2" stroke="#2a56a0" stroke-width="1.1"/><rect x="2.6" y="0.3" width="3.8" height="1.4" fill="#3f74c4"/><circle cx="4.5" cy="3.4" r="1.5" fill="#e8f0fb" stroke="#3a6cba" stroke-width="0.7"/><path d="M0.9 8.3 L2.2 5.2 H6.8 L8.1 8.3 Z" fill="#4a84d8" stroke="#2a56a0" stroke-width="0.6"/><path d="M4.5 5.4 V8" stroke="#dbe8fa" stroke-width="0.9"/></svg>
<div class="t trn" id="trn6" style="left:27.5px;top:478.5px;font-size:8.4px;letter-spacing:-0.181px;color:#111">Jax</div>
<div class="t trd" id="trd6" style="left:194.7px;top:478.5px;font-size:8.4px;letter-spacing:-0.167px;color:#111;width:676px;overflow:hidden">Простая панель - открывает сделки по рынку на всю доступную маржу</div>
<div class="t" style="left:949px;width:57.3px;text-align:right;top:478.5px;font-size:8.4px;letter-spacing:-0.07px;color:#111">2021.03.18</div>
<svg class="a" style="left:876.4px;top:479px" width="8.5" height="8.5" viewBox="0 0 8.5 8.5" ><path d="M4.2 0.4 L5.4 2.9 L8.1 3.2 L6.1 5.1 L6.7 7.9 L4.2 6.5 L1.7 7.9 L2.3 5.1 L0.3 3.2 L3 2.9 Z" fill="#f9e08a" stroke="#d8a84c" stroke-width="0.7"/></svg>
<svg class="a" style="left:889.9px;top:479px" width="8.5" height="8.5" viewBox="0 0 8.5 8.5" ><path d="M4.2 0.4 L5.4 2.9 L8.1 3.2 L6.1 5.1 L6.7 7.9 L4.2 6.5 L1.7 7.9 L2.3 5.1 L0.3 3.2 L3 2.9 Z" fill="#f9e08a" stroke="#d8a84c" stroke-width="0.7"/></svg>
<svg class="a" style="left:903.4px;top:479px" width="8.5" height="8.5" viewBox="0 0 8.5 8.5" ><path d="M4.2 0.4 L5.4 2.9 L8.1 3.2 L6.1 5.1 L6.7 7.9 L4.2 6.5 L1.7 7.9 L2.3 5.1 L0.3 3.2 L3 2.9 Z" fill="#f9e08a" stroke="#d8a84c" stroke-width="0.7"/></svg>
<svg class="a" style="left:916.9px;top:479px" width="8.5" height="8.5" viewBox="0 0 8.5 8.5" ><path d="M4.2 0.4 L5.4 2.9 L8.1 3.2 L6.1 5.1 L6.7 7.9 L4.2 6.5 L1.7 7.9 L2.3 5.1 L0.3 3.2 L3 2.9 Z" fill="#fff" stroke="#b4b4b4" stroke-width="0.7"/><clipPath id="h916479"><rect x="0" y="0" width="4.2" height="9"/></clipPath><path d="M4.2 0.4 L5.4 2.9 L8.1 3.2 L6.1 5.1 L6.7 7.9 L4.2 6.5 L1.7 7.9 L2.3 5.1 L0.3 3.2 L3 2.9 Z" fill="#f9e08a" stroke="#d8a84c" stroke-width="0.7" clip-path="url(#h916479)"/></svg>
<svg class="a" style="left:930.4px;top:479px" width="8.5" height="8.5" viewBox="0 0 8.5 8.5" ><path d="M4.2 0.4 L5.4 2.9 L8.1 3.2 L6.1 5.1 L6.7 7.9 L4.2 6.5 L1.7 7.9 L2.3 5.1 L0.3 3.2 L3 2.9 Z" fill="#fff" stroke="#b4b4b4" stroke-width="0.7"/></svg>
<div class="a" style="left:12.5px;top:491px;width:996.5px;height:15px;background:#ececec;border-bottom:1px solid #dedede;overflow:hidden"></div>
<svg class="a" style="left:14.5px;top:494px" width="9" height="9" viewBox="0 0 9 9" ><rect x="0.9" y="0.9" width="7" height="7" rx="0.6" fill="#f9e27a" stroke="#dcb94a" stroke-width="0.7"/><rect x="1.4" y="1.4" width="6" height="2.4" fill="#fdf3b8" opacity="0.8"/><path d="M2.8 6.6 L6.2 2.2 M3.6 4.6 H6" stroke="#8a3418" stroke-width="0.9" fill="none"/></svg>
<div class="t trn" id="trn7" style="left:27.5px;top:493.5px;font-size:8.4px;letter-spacing:-0.154px;color:#111">3D график</div>
<div class="t trd" id="trd7" style="left:194.7px;top:493.5px;font-size:8.4px;letter-spacing:-0.151px;color:#111;width:676px;overflow:hidden">Строим 3D графики</div>
<div class="t" style="left:949px;width:57.3px;text-align:right;top:493.5px;font-size:8.4px;letter-spacing:-0.07px;color:#111">2021.03.15</div>
<svg class="a" style="left:876.4px;top:494px" width="8.5" height="8.5" viewBox="0 0 8.5 8.5" ><path d="M4.2 0.4 L5.4 2.9 L8.1 3.2 L6.1 5.1 L6.7 7.9 L4.2 6.5 L1.7 7.9 L2.3 5.1 L0.3 3.2 L3 2.9 Z" fill="#f9e08a" stroke="#d8a84c" stroke-width="0.7"/></svg>
<svg class="a" style="left:889.9px;top:494px" width="8.5" height="8.5" viewBox="0 0 8.5 8.5" ><path d="M4.2 0.4 L5.4 2.9 L8.1 3.2 L6.1 5.1 L6.7 7.9 L4.2 6.5 L1.7 7.9 L2.3 5.1 L0.3 3.2 L3 2.9 Z" fill="#f9e08a" stroke="#d8a84c" stroke-width="0.7"/></svg>
<svg class="a" style="left:903.4px;top:494px" width="8.5" height="8.5" viewBox="0 0 8.5 8.5" ><path d="M4.2 0.4 L5.4 2.9 L8.1 3.2 L6.1 5.1 L6.7 7.9 L4.2 6.5 L1.7 7.9 L2.3 5.1 L0.3 3.2 L3 2.9 Z" fill="#f9e08a" stroke="#d8a84c" stroke-width="0.7"/></svg>
<svg class="a" style="left:916.9px;top:494px" width="8.5" height="8.5" viewBox="0 0 8.5 8.5" ><path d="M4.2 0.4 L5.4 2.9 L8.1 3.2 L6.1 5.1 L6.7 7.9 L4.2 6.5 L1.7 7.9 L2.3 5.1 L0.3 3.2 L3 2.9 Z" fill="#f9e08a" stroke="#d8a84c" stroke-width="0.7"/></svg>
<svg class="a" style="left:930.4px;top:494px" width="8.5" height="8.5" viewBox="0 0 8.5 8.5" ><path d="M4.2 0.4 L5.4 2.9 L8.1 3.2 L6.1 5.1 L6.7 7.9 L4.2 6.5 L1.7 7.9 L2.3 5.1 L0.3 3.2 L3 2.9 Z" fill="#fff" stroke="#b4b4b4" stroke-width="0.7"/></svg>
<div class="a" style="left:12.5px;top:506px;width:996.5px;height:7px;background:#fff;border-bottom:1px solid #dedede;overflow:hidden"></div>
<div class="a" style="left:0;top:506px;width:30px;height:7px;overflow:hidden"><svg class="a" style="left:14.5px;top:3px" width="9" height="9" viewBox="0 0 9 9" ><path d="M1 1.2 H5.6 Q6.6 1.2 6.6 2.4 V5.4 H8.3 V6.8 Q8.3 8 7 8 H3 V3.2 Q3 2.2 1 2.2 Z" fill="#f8dc6a" stroke="#c8982a" stroke-width="0.7"/><path d="M3 5.6 H6.4" stroke="#c8982a" stroke-width="0.5"/></svg></div>
<div class="a" style="left:27.5px;top:506px;width:840px;height:7px;overflow:hidden"><div class="t" style="left:0;top:2.5px;font-size:8.4px;color:#111">Ссылки на демо/реальные сигналы</div><div class="t" style="left:168px;top:2.5px;font-size:8.4px;color:#111;width:676px;overflow:hidden">Скрипт печатает в лог ссылки на демо или реальные сигналы, на которые подписан счет</div></div>
<div class="a" style="left:949px;top:506px;width:58px;height:7px;overflow:hidden"><div class="t" style="left:0;width:56.5px;text-align:right;top:2.5px;font-size:8.4px;color:#111">2021.03.10</div></div>
<div class="a" style="left:876.4px;top:506px;width:9px;height:7px;overflow:hidden"><svg class="a" style="left:0px;top:3px" width="8.5" height="8.5" viewBox="0 0 8.5 8.5" ><path d="M4.2 0.4 L5.4 2.9 L8.1 3.2 L6.1 5.1 L6.7 7.9 L4.2 6.5 L1.7 7.9 L2.3 5.1 L0.3 3.2 L3 2.9 Z" fill="#f9e08a" stroke="#d8a84c" stroke-width="0.7"/></svg></div>
<div class="a" style="left:889.9px;top:506px;width:9px;height:7px;overflow:hidden"><svg class="a" style="left:0px;top:3px" width="8.5" height="8.5" viewBox="0 0 8.5 8.5" ><path d="M4.2 0.4 L5.4 2.9 L8.1 3.2 L6.1 5.1 L6.7 7.9 L4.2 6.5 L1.7 7.9 L2.3 5.1 L0.3 3.2 L3 2.9 Z" fill="#f9e08a" stroke="#d8a84c" stroke-width="0.7"/></svg></div>
<div class="a" style="left:903.4px;top:506px;width:9px;height:7px;overflow:hidden"><svg class="a" style="left:0px;top:3px" width="8.5" height="8.5" viewBox="0 0 8.5 8.5" ><path d="M4.2 0.4 L5.4 2.9 L8.1 3.2 L6.1 5.1 L6.7 7.9 L4.2 6.5 L1.7 7.9 L2.3 5.1 L0.3 3.2 L3 2.9 Z" fill="#f9e08a" stroke="#d8a84c" stroke-width="0.7"/></svg></div>
<div class="a" style="left:916.9px;top:506px;width:9px;height:7px;overflow:hidden"><svg class="a" style="left:0px;top:3px" width="8.5" height="8.5" viewBox="0 0 8.5 8.5" ><path d="M4.2 0.4 L5.4 2.9 L8.1 3.2 L6.1 5.1 L6.7 7.9 L4.2 6.5 L1.7 7.9 L2.3 5.1 L0.3 3.2 L3 2.9 Z" fill="#fff" stroke="#b4b4b4" stroke-width="0.7"/></svg></div>
<div class="a" style="left:930.4px;top:506px;width:9px;height:7px;overflow:hidden"><svg class="a" style="left:0px;top:3px" width="8.5" height="8.5" viewBox="0 0 8.5 8.5" ><path d="M4.2 0.4 L5.4 2.9 L8.1 3.2 L6.1 5.1 L6.7 7.9 L4.2 6.5 L1.7 7.9 L2.3 5.1 L0.3 3.2 L3 2.9 Z" fill="#fff" stroke="#b4b4b4" stroke-width="0.7"/></svg></div>
<div class="a" style="left:192px;top:386px;width:1px;height:127px;background:#d4d4d4"></div>
<div class="a" style="left:873px;top:386px;width:1px;height:127px;background:#d4d4d4"></div>
<div class="a" style="left:948.5px;top:386px;width:1px;height:127px;background:#d4d4d4"></div>
<div class="a" style="left:1009px;top:373.5px;width:11.5px;height:139.5px;background:#e6e3dd"></div>
<div class="btn" style="left:1009px;top:373.5px;width:11.5px;height:12px;background:#d4d0c8;border-color:#fff #404040 #404040 #fff"></div>
<svg class="a" style="left:1012px;top:377.5px" width="6" height="4" viewBox="0 0 6 4" ><path d="M0 4 L3 0.5 L6 4 Z" fill="#000"/></svg>
<div class="btn" style="left:1009px;top:385.5px;width:11.5px;height:3.5px;background:#d4d0c8;border-color:#fff #404040 #404040 #fff"></div>
<div class="btn" style="left:1009px;top:501px;width:11.5px;height:12px;background:#d4d0c8;border-color:#fff #404040 #404040 #fff"></div>
<svg class="a" style="left:1012px;top:505.5px" width="6" height="4" viewBox="0 0 6 4" ><path d="M0 0 L3 3.5 L6 0 Z" fill="#000"/></svg>
<div class="t" id="bt0" style="left:21px;top:516px;font-size:8.4px;color:#555">Торговля</div>
<div class="t" id="bt1" style="left:71px;top:516px;font-size:8.4px;color:#555">Активы</div>
<div class="t" id="bt2" style="left:113.5px;top:516px;font-size:8.4px;color:#555">История Счета</div>
<div class="t" id="bt3" style="left:188px;top:516px;font-size:8.4px;color:#555">Новости</div>
<div class="t" id="bt4" style="left:236px;top:516px;font-size:8.4px;color:#555">Алерты</div>
<div class="t" id="bt5" style="left:281px;top:516px;font-size:8.4px;color:#555">Почта</div>
<div class="t" id="bt6" style="left:326px;top:516px;font-size:8.4px;color:#555">Маркет</div>
<div class="t" id="bt7" style="left:370px;top:516px;font-size:8.4px;color:#555">Сигналы</div>
<div class="t" id="bt8" style="left:421px;top:516px;font-size:8.4px;color:#555">Статьи</div>
<div class="a" style="left:63.5px;top:516.5px;width:1px;height:8.5px;background:#555"></div>
<div class="a" style="left:107px;top:516.5px;width:1px;height:8.5px;background:#555"></div>
<div class="a" style="left:181px;top:516.5px;width:1px;height:8.5px;background:#555"></div>
<div class="a" style="left:229px;top:516.5px;width:1px;height:8.5px;background:#555"></div>
<div class="a" style="left:273px;top:516.5px;width:1px;height:8.5px;background:#555"></div>
<div class="a" style="left:318px;top:516.5px;width:1px;height:8.5px;background:#555"></div>
<div class="a" style="left:362px;top:516.5px;width:1px;height:8.5px;background:#555"></div>
<div class="a" style="left:413px;top:516.5px;width:1px;height:8.5px;background:#555"></div>
<div class="t" style="left:307.5px;top:519.5px;font-size:5.5px;color:#e03020">1</div>
<div class="a" style="left:11px;top:528.8px;width:1013px;height:1.2px;background:#eeece8"></div>
<div class="a" style="left:0;top:530.5px;width:1024px;height:1px;background:#a09c96"></div>
<div class="a" style="left:0;top:531.7px;width:1024px;height:1px;background:#f4f2ee"></div>
<div class="t" id="sb0" style="left:512.5px;top:536.8px;font-size:8.4px;letter-spacing:-0.07px;color:#222">Default</div>
<div class="t" id="sb1" style="left:599px;top:536.8px;font-size:8.4px;letter-spacing:-0.07px;color:#222">2021.05.03 00:00</div>
<div class="t" id="sb2" style="left:675px;top:536.8px;font-size:8.4px;letter-spacing:-0.07px;color:#222">O: 1.38077</div>
<div class="t" id="sb3" style="left:727px;top:536.8px;font-size:8.4px;letter-spacing:-0.07px;color:#222">H: 1.38327</div>
<div class="t" id="sb4" style="left:779px;top:536.8px;font-size:8.4px;letter-spacing:-0.07px;color:#222">L: 1.38050</div>
<div class="t" id="sb5" style="left:831px;top:536.8px;font-size:8.4px;letter-spacing:-0.07px;color:#222">C: 1.38325</div>
<div class="t" id="sb6" style="left:883px;top:536.8px;font-size:8.4px;letter-spacing:-0.07px;color:#222">V: 3434</div>
<div class="t" id="sb7" style="left:953px;top:536.8px;font-size:8.4px;letter-spacing:-0.07px;color:#222">6/0 kb</div>
<div class="vsep" style="left:508px;top:536px;height:13px"></div>
<div class="vsep" style="left:595px;top:536px;height:13px"></div>
<div class="vsep" style="left:670.5px;top:536px;height:13px"></div>
<div class="vsep" style="left:720.5px;top:536px;height:13px"></div>
<div class="vsep" style="left:773.5px;top:536px;height:13px"></div>
<div class="vsep" style="left:824px;top:536px;height:13px"></div>
<div class="vsep" style="left:875.5px;top:536px;height:13px"></div>
<div class="vsep" style="left:927px;top:536px;height:13px"></div>
<svg class="a" style="left:931.3px;top:536px" width="18" height="10" viewBox="0 0 18 10" ><rect x="0.00" y="0" width="1.15" height="8.20" fill="#86a23c"/><rect x="0.00" y="8.20" width="1.15" height="1.80" fill="#3c4c78"/><rect x="1.85" y="0" width="1.15" height="7.45" fill="#86a23c"/><rect x="1.85" y="7.45" width="1.15" height="2.55" fill="#3c4c78"/><rect x="3.70" y="0" width="1.15" height="6.70" fill="#86a23c"/><rect x="3.70" y="6.70" width="1.15" height="3.30" fill="#3c4c78"/><rect x="5.55" y="0" width="1.15" height="5.95" fill="#86a23c"/><rect x="5.55" y="5.95" width="1.15" height="4.05" fill="#3c4c78"/><rect x="7.40" y="0" width="1.15" height="5.20" fill="#86a23c"/><rect x="7.40" y="5.20" width="1.15" height="4.80" fill="#3c4c78"/><rect x="9.25" y="0" width="1.15" height="4.45" fill="#86a23c"/><rect x="9.25" y="4.45" width="1.15" height="5.55" fill="#3c4c78"/><rect x="11.10" y="0" width="1.15" height="3.70" fill="#86a23c"/><rect x="11.10" y="3.70" width="1.15" height="6.30" fill="#3c4c78"/><rect x="12.95" y="0" width="1.15" height="2.95" fill="#86a23c"/><rect x="12.95" y="2.95" width="1.15" height="7.05" fill="#3c4c78"/><rect x="14.80" y="0" width="1.15" height="2.20" fill="#86a23c"/><rect x="14.80" y="2.20" width="1.15" height="7.80" fill="#3c4c78"/><rect x="16.65" y="0" width="1.15" height="1.45" fill="#86a23c"/><rect x="16.65" y="1.45" width="1.15" height="8.55" fill="#3c4c78"/></svg>
<div class="a" style="left:446px;top:187px;width:190.5px;height:351.0px;background:#fff;border:1px solid;border-color:#d4d0c8 #404040 #404040 #d4d0c8;box-shadow:inset -1px -1px 0 #808080, inset 1px 1px 0 #fff"></div>
<div class="a" style="left:447.5px;top:188.5px;width:18.5px;height:347.5px;background:#d6d2cb"></div>
<svg class="a" style="left:450.5px;top:192.6px" width="12" height="12" viewBox="0 0 12 12" ><path d="M6 1 L10 5.2 L7.6 5.2 L7.6 8.5 L4.4 8.5 L4.4 5.2 L2 5.2 Z" fill="#2f7de0" stroke="#1a55b0" stroke-width="0.5"/><path d="M2 10.3 H10" stroke="#555" stroke-width="1"/></svg>
<div class="t mi" id="mm0" style="left:472.5px;top:193.6px;font-size:8.4px;letter-spacing:-0.166px;color:#1a1a1a">Buy Limit 1.00</div>
<div class="t" style="left:565.0px;width:60.5px;text-align:right;top:193.6px;font-size:8.4px;letter-spacing:-0.030px;color:#1a1a1a">1.40350</div>
<div class="a" style="left:472.5px;top:209.75px;width:161.0px;height:1px;background:#d2cfc8"></div>
<div class="t mi" id="mm1" style="left:472.5px;top:216.85px;font-size:8.4px;letter-spacing:-0.170px;color:#1a1a1a">Торговля</div>
<svg class="a" style="left:627.2px;top:219.95px" width="2.6" height="4.4" viewBox="0 0 2.6 4.4" ><path d="M0 0 L2.6 2.2 L0 4.4 Z" fill="#111"/></svg>
<svg class="a" style="left:450.5px;top:233.1px" width="12" height="12" viewBox="0 0 12 12" ><rect x="0.5" y="1" width="11.5" height="10" fill="#fdf3d8" stroke="#3b74c6"/><rect x="1" y="1.5" width="10.5" height="2" fill="#5b92de"/><path d="M2 5.5 H5.5 M7 5.5 H10.5 M2 7.5 H5.5 M7 7.5 H10.5 M2 9.3 H5.5 M7 9.3 H10.5" stroke="#e08a3a" stroke-width="1"/></svg>
<div class="t mi" id="mm2" style="left:472.5px;top:234.1px;font-size:8.4px;letter-spacing:-0.170px;color:#1a1a1a">Стакан ц<u>е</u>н</div>
<div class="t" style="left:565.0px;width:60.5px;text-align:right;top:234.1px;font-size:8.4px;letter-spacing:-0.030px;color:#1a1a1a">Alt+B</div>
<svg class="a" style="left:450.5px;top:250.35px" width="12" height="12" viewBox="0 0 12 12" ><rect x="0.5" y="4.5" width="4.5" height="3.5" fill="#e2311d"/><rect x="7" y="4.5" width="4.5" height="3.5" fill="#2d6fd6"/><rect x="5" y="5.5" width="2" height="1.5" fill="#999"/></svg>
<div class="t mi" id="mm3" style="left:472.5px;top:251.35px;font-size:8.4px;letter-spacing:-0.170px;color:#1a1a1a">Торговл<u>я</u> в один клик</div>
<div class="t" style="left:565.0px;width:60.5px;text-align:right;top:251.35px;font-size:8.4px;letter-spacing:-0.030px;color:#1a1a1a">Alt+T</div>
<svg class="a" style="left:450.5px;top:267.6px" width="12" height="12" viewBox="0 0 12 12" ><rect x="0.5" y="0.5" width="9" height="9" fill="#eef4fc" stroke="#3b74c6"/><rect x="1" y="1" width="8" height="1.6" fill="#5b92de"/><rect x="5" y="4.5" width="6.5" height="7" fill="#f6cf4a" stroke="#b88a18" stroke-width="0.7"/><text x="8.2" y="10.3" font-size="6" font-style="italic" fill="#7a5208" text-anchor="middle" font-family="Liberation Serif, serif">f</text></svg>
<div class="t mi" id="mm4" style="left:472.5px;top:268.6px;font-size:8.4px;letter-spacing:-0.170px;color:#1a1a1a">Списо<u>к</u> индикаторов</div>
<div class="t" style="left:565.0px;width:60.5px;text-align:right;top:268.6px;font-size:8.4px;letter-spacing:-0.030px;color:#1a1a1a">Ctrl+I</div>
<svg class="a" style="left:450.5px;top:284.85px" width="12" height="12" viewBox="0 0 12 12" ><rect x="0.5" y="1" width="11" height="10" fill="#f6f9fd" stroke="#3b74c6"/><rect x="1" y="1.5" width="10" height="1.6" fill="#5b92de"/><path d="M2.5 9 L5 6 L6.5 7.5 L9.5 4.5" stroke="#555" stroke-width="0.8" fill="none"/></svg>
<div class="t mi" id="mm5" style="left:472.5px;top:285.85px;font-size:8.4px;letter-spacing:-0.170px;color:#1a1a1a">Список о<u>б</u>ъектов</div>
<div class="t" style="left:565.0px;width:60.5px;text-align:right;top:285.85px;font-size:8.4px;letter-spacing:-0.030px;color:#1a1a1a">Ctrl+B</div>
<div class="a" style="left:472.5px;top:302.0px;width:161.0px;height:1px;background:#d2cfc8"></div>
<div class="t mi" id="mm6" style="left:472.5px;top:309.1px;font-size:8.4px;letter-spacing:-0.170px;color:#1a1a1a">Период графика</div>
<svg class="a" style="left:627.2px;top:312.2px" width="2.6" height="4.4" viewBox="0 0 2.6 4.4" ><path d="M0 0 L2.6 2.2 L0 4.4 Z" fill="#111"/></svg>
<div class="a" style="left:447.5px;top:322.75px;width:187.0px;height:17.25px;background:#a9b7dc;border:1px solid #52649e"></div>
<div class="t mi" id="mm7" style="left:472.5px;top:326.35px;font-size:8.4px;letter-spacing:-0.170px;color:#1a1a1a">Шаблон</div>
<svg class="a" style="left:627.2px;top:329.45px" width="2.6" height="4.4" viewBox="0 0 2.6 4.4" ><path d="M0 0 L2.6 2.2 L0 4.4 Z" fill="#111"/></svg>
<svg class="a" style="left:450.5px;top:342.6px" width="12" height="12" viewBox="0 0 12 12" ><path d="M2 5 A4.2 4.2 0 0 1 10 4" stroke="#2f7de0" stroke-width="1.8" fill="none"/><path d="M10.8 1.2 L10.8 5.2 L7 4.6 Z" fill="#2f7de0"/><path d="M10 7.5 A4.2 4.2 0 0 1 2 8.5" stroke="#2f7de0" stroke-width="1.8" fill="none"/><path d="M1.2 11.3 L1.2 7.3 L5 7.9 Z" fill="#2f7de0"/></svg>
<div class="t mi" id="mm8" style="left:472.5px;top:343.6px;font-size:8.4px;letter-spacing:-0.170px;color:#1a1a1a"><u>О</u>бновить</div>
<div class="a" style="left:472.5px;top:359.75px;width:161.0px;height:1px;background:#d2cfc8"></div>
<div class="t mi" id="mm9" style="left:472.5px;top:366.85px;font-size:8.4px;letter-spacing:-0.170px;color:#1a1a1a">Автор<u>а</u>змер</div>
<div class="t" style="left:565.0px;width:60.5px;text-align:right;top:366.85px;font-size:8.4px;letter-spacing:-0.030px;color:#1a1a1a">Ctrl+A</div>
<svg class="a" style="left:450.5px;top:383.1px" width="12" height="12" viewBox="0 0 12 12" ><path d="M3 1 V11 M6 1 V11 M9 1 V11 M1 3.5 H11.5 M1 6.5 H11.5 M1 9.5 H11.5" stroke="#4a7ec8" stroke-width="0.8"/></svg>
<div class="t mi" id="mm10" style="left:472.5px;top:384.1px;font-size:8.4px;letter-spacing:-0.170px;color:#1a1a1a"><u>С</u>етка</div>
<div class="t" style="left:565.0px;width:60.5px;text-align:right;top:384.1px;font-size:8.4px;letter-spacing:-0.030px;color:#1a1a1a">Ctrl+G</div>
<svg class="a" style="left:450.5px;top:400.35px" width="12" height="12" viewBox="0 0 12 12" ><path d="M2.5 1 V11 M1 10 H11.5" stroke="#444" stroke-width="0.9"/><path d="M4.5 10 V8 M6.5 10 V7 M8.5 10 V8.4 M10.3 10 V7.6" stroke="#22a038" stroke-width="1.3"/></svg>
<div class="t mi" id="mm11" style="left:472.5px;top:401.35px;font-size:8.4px;letter-spacing:-0.170px;color:#1a1a1a">О<u>б</u>ъемы</div>
<div class="t" style="left:565.0px;width:60.5px;text-align:right;top:401.35px;font-size:8.4px;letter-spacing:-0.030px;color:#1a1a1a">Ctrl+L</div>
<div class="a" style="left:472.5px;top:417.5px;width:161.0px;height:1px;background:#d2cfc8"></div>
<svg class="a" style="left:450.5px;top:423.6px" width="12" height="12" viewBox="0 0 12 12" ><path d="M7.5 7.5 L11.3 11.3" stroke="#d9a428" stroke-width="2" stroke-linecap="round"/><circle cx="4.8" cy="4.8" r="3.8" fill="#e6f1fd" stroke="#3c82d8" stroke-width="1.2"/><path d="M2.8 4.8 H6.8 M4.8 2.8 V6.8" stroke="#2a6fcc" stroke-width="1.1"/></svg>
<div class="t mi" id="mm12" style="left:472.5px;top:424.6px;font-size:8.4px;letter-spacing:-0.170px;color:#1a1a1a"><u>У</u>величение</div>
<div class="t" style="left:565.0px;width:60.5px;text-align:right;top:424.6px;font-size:8.4px;letter-spacing:-0.030px;color:#1a1a1a">+</div>
<svg class="a" style="left:450.5px;top:440.85px" width="12" height="12" viewBox="0 0 12 12" ><path d="M7.5 7.5 L11.3 11.3" stroke="#d9a428" stroke-width="2" stroke-linecap="round"/><circle cx="4.8" cy="4.8" r="3.8" fill="#e6f1fd" stroke="#3c82d8" stroke-width="1.2"/><path d="M2.8 4.8 H6.8" stroke="#2a6fcc" stroke-width="1.1"/></svg>
<div class="t mi" id="mm13" style="left:472.5px;top:441.85px;font-size:8.4px;letter-spacing:-0.170px;color:#1a1a1a">Ум<u>е</u>ньшение</div>
<div class="t" style="left:565.0px;width:60.5px;text-align:right;top:441.85px;font-size:8.4px;letter-spacing:-0.030px;color:#1a1a1a">-</div>
<div class="a" style="left:472.5px;top:458.0px;width:161.0px;height:1px;background:#d2cfc8"></div>
<svg class="a" style="left:450.5px;top:464.1px" width="12" height="12" viewBox="0 0 12 12" ><rect x="0.5" y="0.5" width="8" height="8.5" fill="#f6f9fd" stroke="#3b74c6"/><path d="M2.5 2 V6.5 H6.5" stroke="#555" stroke-width="0.7" fill="none"/><rect x="5.5" y="5.5" width="6" height="6" fill="#3a7ad8" stroke="#1d4f9c" stroke-width="0.6"/><rect x="7" y="6" width="3" height="2" fill="#fff"/></svg>
<div class="t mi" id="mm14" style="left:472.5px;top:465.1px;font-size:8.4px;letter-spacing:-0.170px;color:#1a1a1a">Сохранить как ри<u>с</u>унок</div>
<svg class="a" style="left:450.5px;top:481.35px" width="12" height="12" viewBox="0 0 12 12" ><rect x="0.5" y="0.5" width="8.5" height="9.5" fill="#f3cf55" stroke="#b88a18" stroke-width="0.8"/><path d="M2.5 2.5 V7 H7" stroke="#8a6210" stroke-width="0.7" fill="none"/><rect x="4" y="7.5" width="8" height="3.6" rx="1" fill="#e4e4e4" stroke="#888" stroke-width="0.6"/></svg>
<div class="t mi" id="mm15" style="left:472.5px;top:482.35px;font-size:8.4px;letter-spacing:-0.170px;color:#1a1a1a">П<u>р</u>едварительный просмотр</div>
<svg class="a" style="left:450.5px;top:498.6px" width="12" height="12" viewBox="0 0 12 12" ><rect x="3" y="0.5" width="6" height="5" fill="#f3cf55" stroke="#b88a18" stroke-width="0.8"/><rect x="0.7" y="5" width="10.6" height="4.6" rx="1.2" fill="#e2e2e2" stroke="#8a8a8a" stroke-width="0.7"/><rect x="2.5" y="8.5" width="7" height="2.8" fill="#f8f8f8" stroke="#8a8a8a" stroke-width="0.6"/></svg>
<div class="t mi" id="mm16" style="left:472.5px;top:499.6px;font-size:8.4px;letter-spacing:-0.170px;color:#1a1a1a">Печа<u>т</u>ь</div>
<div class="t" style="left:565.0px;width:60.5px;text-align:right;top:499.6px;font-size:8.4px;letter-spacing:-0.030px;color:#1a1a1a">Ctrl+P</div>
<div class="a" style="left:472.5px;top:515.75px;width:161.0px;height:1px;background:#d2cfc8"></div>
<svg class="a" style="left:450.5px;top:521.85px" width="12" height="12" viewBox="0 0 12 12" ><rect x="0.5" y="0.5" width="10" height="8.5" fill="#eef4fc" stroke="#3b74c6"/><rect x="1" y="1" width="9" height="1.8" fill="#5b92de"/><circle cx="8.3" cy="8.6" r="3" fill="#f1b932" stroke="#b8841a" stroke-width="0.7"/><circle cx="8.3" cy="8.6" r="1" fill="#fff6dc"/></svg>
<div class="t mi" id="mm17" style="left:472.5px;top:522.85px;font-size:8.4px;letter-spacing:-0.132px;color:#1a1a1a">Свойс<u>т</u>ва...</div>
<div class="t" style="left:565.0px;width:60.5px;text-align:right;top:522.85px;font-size:8.4px;letter-spacing:-0.030px;color:#1a1a1a">F8</div>
<div class="a" style="left:634.5px;top:106px;width:237px;height:234.75px;background:#fff;border:1px solid;border-color:#d4d0c8 #404040 #404040 #d4d0c8;box-shadow:inset -1px -1px 0 #808080, inset 1px 1px 0 #fff"></div>
<div class="a" style="left:636.0px;top:107.5px;width:18.5px;height:231.25px;background:#d6d2cb"></div>
<svg class="a" style="left:639.0px;top:111.6px" width="12" height="12" viewBox="0 0 12 12" ><rect x="0.5" y="0.5" width="11" height="10" fill="#f4f8fd" stroke="#2f6cc4"/><rect x="1" y="1" width="10" height="2" fill="#4b8ade"/><path d="M2 5.5 L4 4.6 L6 5.8 L8 4.8 L10 5.6" stroke="#c04030" stroke-width="0.7" fill="none"/><rect x="6" y="6" width="5.5" height="5.5" fill="#3a7ad8" stroke="#1d4f9c" stroke-width="0.6"/><rect x="7.3" y="6.4" width="2.8" height="1.8" fill="#fff"/></svg>
<div class="t mi" id="sm0" style="left:660.5px;top:112.6px;font-size:8.4px;letter-spacing:-0.147px;color:#1a1a1a"><u>С</u>охранить шаблон...</div>
<div class="t mi" id="sm1" style="left:660.5px;top:129.85px;font-size:8.4px;letter-spacing:-0.147px;color:#1a1a1a"><u>З</u>агрузить шаблон...</div>
<div class="t mi" id="sm2" style="left:660.5px;top:147.1px;font-size:8.4px;letter-spacing:-0.170px;color:#1a1a1a">Удалить шаблон</div>
<svg class="a" style="left:862.2px;top:150.2px" width="2.6" height="4.4" viewBox="0 0 2.6 4.4" ><path d="M0 0 L2.6 2.2 L0 4.4 Z" fill="#111"/></svg>
<div class="a" style="left:660.5px;top:163.25px;width:208px;height:1px;background:#d2cfc8"></div>
<div class="t mi" id="sm3" style="left:660.5px;top:170.35px;font-size:8.4px;letter-spacing:-0.744px;color:#1a1a1a">ADX</div>
<div class="t mi" id="sm4" style="left:660.5px;top:187.6px;font-size:8.4px;letter-spacing:-0.185px;color:#1a1a1a">BollingerBands</div>
<div class="t mi" id="sm5" style="left:660.5px;top:204.85px;font-size:8.4px;letter-spacing:-0.316px;color:#1a1a1a">Layers</div>
<div class="t mi" id="sm6" style="left:660.5px;top:222.1px;font-size:8.4px;letter-spacing:-0.206px;color:#1a1a1a">Momentum</div>
<div class="t mi" id="sm7" style="left:660.5px;top:239.35px;font-size:8.4px;letter-spacing:-0.182px;color:#1a1a1a">Popular</div>
<div class="t mi" id="sm8" style="left:660.5px;top:256.6px;font-size:8.4px;letter-spacing:-0.118px;color:#1a1a1a">RED Wave Oscillator Template</div>
<div class="t mi" id="sm9" style="left:660.5px;top:273.85px;font-size:8.4px;letter-spacing:-0.035px;color:#1a1a1a">RED Wave Oscillator+FT Elliott Trigger Template</div>
<div class="t mi" id="sm10" style="left:660.5px;top:291.1px;font-size:8.4px;letter-spacing:-0.057px;color:#1a1a1a">Volume</div>
<div class="t mi" id="sm11" style="left:660.5px;top:308.35px;font-size:8.4px;letter-spacing:0.040px;color:#1a1a1a">Williams</div>
<div class="a" style="left:636.0px;top:322.0px;width:233.5px;height:17.25px;background:#a9b7dc;border:1px solid #52649e"></div>
<div class="t mi" id="sm12" style="left:660.5px;top:325.6px;font-size:8.4px;letter-spacing:-0.170px;color:#1a1a1a">Пробой облака Кумо</div>
<div class="a" style="left:634px;top:318.5px;width:238.5px;height:25px;border:5px solid #fb0007"></div>
</body></html>
